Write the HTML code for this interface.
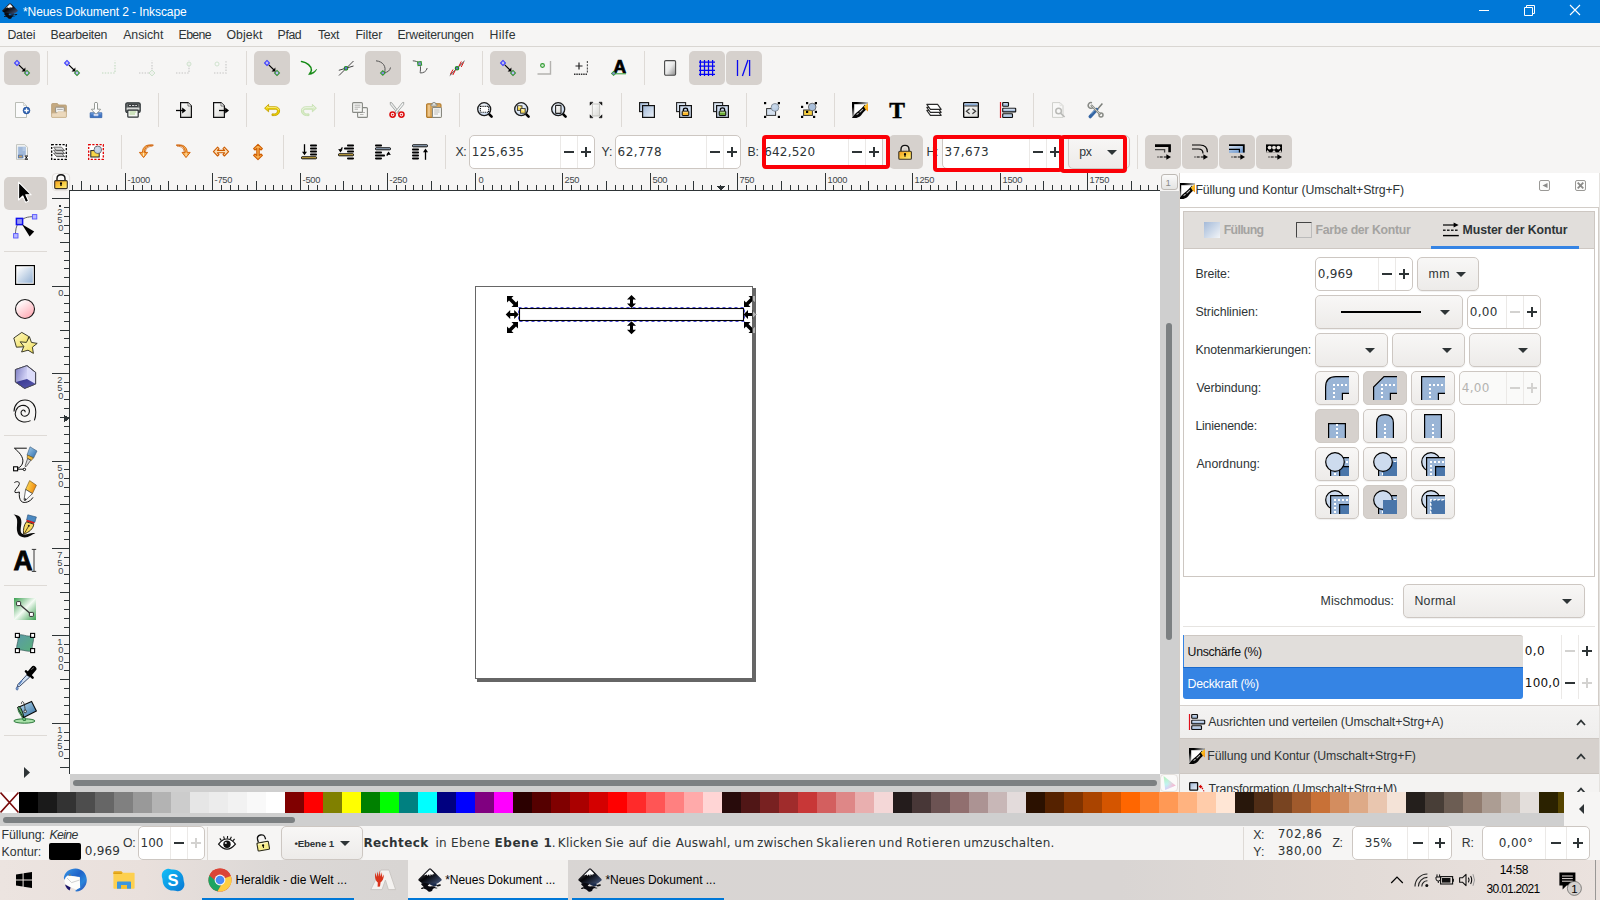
<!DOCTYPE html>
<html lang="de"><head><meta charset="utf-8"><title>*Neues Dokument 2 - Inkscape</title>
<style>
html,body{margin:0;padding:0;}
body{width:1600px;height:900px;overflow:hidden;position:relative;background:#f6f5f4;font-family:"Liberation Sans",sans-serif;color:#2e3436;}
#app div,#app span,#app svg{position:absolute;}
#app span{white-space:pre;line-height:1;}
#app svg{overflow:visible;}
.fD{font-family:"DejaVu Sans",sans-serif;}
.fS{font-family:"Liberation Serif",serif;}
</style></head><body><div id="app">
<div style="left:0px;top:0px;width:1600px;height:23px;background:#0078d7;"></div>
<svg style="left:2.0px;top:3.0px;" width="16" height="16" viewBox="0 0 24 24"><defs><linearGradient id="gink" x1="0.2" y1="0" x2="1" y2="0.8"><stop offset="0" stop-color="#55555c"/><stop offset="0.45" stop-color="#050508"/><stop offset="1" stop-color="#3e4e70"/></linearGradient></defs><path d="M12 0.2Q12.7 0.2 13.4 0.9L23.4 10.9Q24.2 11.8 23.2 12.8Q20.6 15.2 17.6 16.2H6.4Q3.4 15.2 0.8 12.8Q-0.2 11.8 0.6 10.9L10.6 0.9Q11.3 0.2 12 0.2Z" fill="url(#gink)"/><path d="M12 1.4L15.4 4.8L16.4 6.6L14.8 6L14.2 7.6L12.8 6L12 8.6L11 6.2L9.2 8L9 6.4L5.8 7.6Z" fill="#fff"/><path d="M3.4 15.6C5.2 14.8 9 15 10.8 15.8C12.4 16.6 9 17.2 10 18C11.4 19 16.4 17.6 17.6 19C18.6 20.2 14.4 20.4 14.6 21.6C14.8 22.8 13 24 11.4 23.8C9.6 23.6 9.6 22.4 8.2 21.6C6.6 20.8 4.4 20.4 5.4 19.2C6.2 18.4 2.2 17 3.4 15.6Z" fill="#0a0a10"/><path d="M11.6 15.6H18C18.6 16.6 19.4 17.2 18.6 18C16.8 18.4 12.6 18.2 11.6 15.6Z" fill="#1c2c4c"/><ellipse cx="20.8" cy="17.4" rx="2.2" ry="0.9" fill="#111" transform="rotate(-12 20.8 17.4)"/><ellipse cx="18.2" cy="20" rx="1.2" ry="0.6" fill="#333"/><ellipse cx="4.4" cy="20.2" rx="1.4" ry="0.8" fill="#111" transform="rotate(-15 4.4 20.2)"/></svg>
<span style="left:23.0px;top:6px;font-size:12px;color:#fff;letter-spacing:-0.09px;">*Neues Dokument 2 - Inkscape</span>
<div style="left:1479px;top:10px;width:10px;height:1px;background:#fff;"></div>
<svg style="left:1524px;top:5px" width="11" height="11" viewBox="0 0 11 11"><path d="M2.5 2.5V0.5H10.5V8.5H8.5M0.5 2.5H8.5V10.5H0.5Z" fill="none" stroke="#fff" stroke-width="1"/></svg>
<svg style="left:1570px;top:5px" width="10" height="10" viewBox="0 0 10 10"><path d="M0 0L10 10M10 0L0 10" fill="none" stroke="#fff" stroke-width="1.1"/></svg>
<div style="left:0px;top:23px;width:1600px;height:23px;background:#f6f5f4;"></div>
<div style="left:0px;top:46px;width:1600px;height:1px;background:#d9d6d2;"></div>
<span style="left:7.4px;top:29px;font-size:12.3px;letter-spacing:-0.15px;">Datei</span>
<span style="left:50.6px;top:29px;font-size:12.3px;letter-spacing:-0.31px;">Bearbeiten</span>
<span style="left:123.2px;top:29px;font-size:12.3px;letter-spacing:-0.03px;">Ansicht</span>
<span style="left:178.6px;top:29px;font-size:12.3px;letter-spacing:-0.65px;">Ebene</span>
<span style="left:226.4px;top:29px;font-size:12.3px;letter-spacing:0.08px;">Objekt</span>
<span style="left:277.6px;top:29px;font-size:12.3px;letter-spacing:-0.40px;">Pfad</span>
<span style="left:318.0px;top:29px;font-size:12.3px;letter-spacing:-0.40px;">Text</span>
<span style="left:355.4px;top:29px;font-size:12.3px;letter-spacing:-0.08px;">Filter</span>
<span style="left:397.4px;top:29px;font-size:12.3px;letter-spacing:-0.23px;">Erweiterungen</span>
<span style="left:489.4px;top:29px;font-size:12.3px;letter-spacing:0.40px;">Hilfe</span>
<div style="left:4px;top:51px;width:36px;height:34px;background:#d6d1cd;border-radius:5px;"></div>
<svg style="left:14.0px;top:60.0px;" width="16" height="16" viewBox="0 0 16 16"><path d="M3 -0.20000000000000018L6.2 3L3 6.2L-0.20000000000000018 3Z" fill="#3535ff"/><circle cx="3" cy="3" r="1.44" fill="#b9b9f5"/><path d="M13 9.8L16.2 13L13 16.2L9.8 13Z" fill="#2f8f2f"/><circle cx="13" cy="13" r="1.44" fill="#b9b9f5"/><path d="M4.8 4.8L10 10" stroke="#000" stroke-width="1.1"/><path d="M11.4 11.4V7.6L7.6 11.4Z" fill="#000"/></svg>
<div style="left:47px;top:51px;width:1px;height:34px;background:#dedad6;"></div>
<svg style="left:64.0px;top:60.0px;" width="16" height="16" viewBox="0 0 16 16"><path d="M3 -0.20000000000000018L6.2 3L3 6.2L-0.20000000000000018 3Z" fill="#3535ff"/><circle cx="3" cy="3" r="1.44" fill="#b9b9f5"/><path d="M13 9.8L16.2 13L13 16.2L9.8 13Z" fill="#2f8f2f"/><circle cx="13" cy="13" r="1.44" fill="#b9b9f5"/><path d="M4.8 4.8L10 10" stroke="#000" stroke-width="1.1"/><path d="M11.4 11.4V7.6L7.6 11.4Z" fill="#000"/></svg>
<svg style="left:101.0px;top:60.0px;opacity:0.2;" width="16" height="16" viewBox="0 0 16 16"><path d="M1 13H14V0.5" stroke="#3a9a3a" stroke-width="1.6" stroke-dasharray="1.4 1.4" fill="none"/></svg>
<svg style="left:138.0px;top:60.0px;opacity:0.2;" width="16" height="16" viewBox="0 0 16 16"><path d="M1 13H14V0.5" stroke="#555" stroke-width="1.6" stroke-dasharray="1.4 1.4" fill="none"/><path d="M14 10L17 13L14 16L11 13Z" fill="#cfe6cf" stroke="#3a9a3a"/></svg>
<svg style="left:175.0px;top:60.0px;opacity:0.2;" width="16" height="16" viewBox="0 0 16 16"><path d="M1 13H14V0.5" stroke="#555" stroke-width="1.6" stroke-dasharray="1.4 1.4" fill="none"/><circle cx="14" cy="4" r="2" fill="#cfe6cf" stroke="#3a9a3a"/></svg>
<svg style="left:212.0px;top:60.0px;opacity:0.2;" width="16" height="16" viewBox="0 0 16 16"><path d="M2 13H14V0.5" stroke="#555" stroke-width="1.6" stroke-dasharray="1.4 1.4" fill="none"/><circle cx="5" cy="4" r="2" fill="#fff" stroke="#3a9a3a"/></svg>
<div style="left:246px;top:51px;width:1px;height:34px;background:#dedad6;"></div>
<div style="left:254px;top:51px;width:36px;height:34px;background:#d6d1cd;border-radius:5px;"></div>
<svg style="left:264.0px;top:60.0px;" width="16" height="16" viewBox="0 0 16 16"><path d="M3 -0.20000000000000018L6.2 3L3 6.2L-0.20000000000000018 3Z" fill="#3535ff"/><circle cx="3" cy="3" r="1.44" fill="#b9b9f5"/><path d="M13 9.8L16.2 13L13 16.2L9.8 13Z" fill="#2f8f2f"/><circle cx="13" cy="13" r="1.44" fill="#b9b9f5"/><path d="M4.8 4.8L10 10" stroke="#000" stroke-width="1.1"/><path d="M11.4 11.4V7.6L7.6 11.4Z" fill="#000"/></svg>
<svg style="left:301.0px;top:60.0px;" width="16" height="16" viewBox="0 0 16 16"><path d="M0.5 1.6C6 2.5 10.5 6 10.4 10.2" fill="none" stroke="#138a13" stroke-width="1.5" stroke-linecap="round"/><path d="M15.6 9.2C14.5 12.5 11.5 14.4 7.6 14.6L10.6 9.6C10.8 11.5 10.3 12.2 9.8 13C12 12.6 13.8 11.5 15.6 9.2Z" fill="#138a13" stroke="#138a13" stroke-width="0.6" stroke-linejoin="round"/></svg>
<svg style="left:338.0px;top:60.0px;" width="16" height="16" viewBox="0 0 16 16"><path d="M1 15.5L15.5 1M0.8 10.3L15.5 6" stroke="#444" stroke-width="1" fill="none"/><circle cx="8" cy="8.3" r="1.8" fill="#6a6ad8" stroke="#1f8a1f" stroke-width="1.1"/></svg>
<div style="left:365px;top:51px;width:36px;height:34px;background:#d6d1cd;border-radius:5px;"></div>
<svg style="left:375.0px;top:60.0px;" width="16" height="16" viewBox="0 0 16 16"><path d="M1 0.8C8 1.5 11.5 6.5 9.5 12.5C12.5 12.5 15 10.5 15.5 7.5" fill="none" stroke="#555" stroke-width="1"/><path d="M7.8 10L10.8 13L7.8 16L4.8 13Z" fill="#2f9a2f"/><circle cx="7.8" cy="13" r="1.35" fill="#8a8ae0"/></svg>
<svg style="left:412.0px;top:60.0px;" width="16" height="16" viewBox="0 0 16 16"><path d="M0.8 0.8C7 1.2 8.5 4 8.5 8C8.5 11 8 12.5 8.3 13C11.5 13 14.5 11.5 15.2 8" fill="none" stroke="#555" stroke-width="1"/><rect x="5.8" y="1.8" width="3.6" height="3.6" fill="#8a8ae0" stroke="#2f9a2f" stroke-width="1.1" transform="rotate(-8 7.6 3.6)"/></svg>
<svg style="left:449.0px;top:60.0px;" width="16" height="16" viewBox="0 0 16 16"><path d="M0.8 15.5L15.5 1" stroke="#333" stroke-width="1" fill="none"/><path d="M1.5 14L4 9.5M3.8 15L6.2 10.5M10 6L12.3 1.5M12.2 7L14.5 2.5" stroke="#e01010" stroke-width="1" fill="none"/><circle cx="8" cy="8.3" r="1.7" fill="#6a6ad8" stroke="#1f8a1f" stroke-width="1.2"/></svg>
<div style="left:482px;top:51px;width:1px;height:34px;background:#dedad6;"></div>
<div style="left:490px;top:51px;width:36px;height:34px;background:#d6d1cd;border-radius:5px;"></div>
<svg style="left:500.0px;top:60.0px;" width="16" height="16" viewBox="0 0 16 16"><path d="M3 -0.20000000000000018L6.2 3L3 6.2L-0.20000000000000018 3Z" fill="#3535ff"/><circle cx="3" cy="3" r="1.44" fill="#b9b9f5"/><path d="M13 9.8L16.2 13L13 16.2L9.8 13Z" fill="#2f8f2f"/><circle cx="13" cy="13" r="1.44" fill="#b9b9f5"/><path d="M4.8 4.8L10 10" stroke="#000" stroke-width="1.1"/><path d="M11.4 11.4V7.6L7.6 11.4Z" fill="#000"/></svg>
<svg style="left:536.0px;top:60.0px;" width="16" height="16" viewBox="0 0 16 16"><path d="M1.5 14H14.5V1" fill="none" stroke="#b4b2af" stroke-width="1.4"/><circle cx="6.5" cy="5.5" r="1.9" fill="#d5ecd5" stroke="#2f9a2f" stroke-width="1.1"/></svg>
<svg style="left:573.0px;top:60.0px;" width="16" height="16" viewBox="0 0 16 16"><path d="M1 14.2H14" fill="none" stroke="#333" stroke-width="1.4" stroke-dasharray="1.5 0.8"/><path d="M14.4 1V13" fill="none" stroke="#555" stroke-width="1.2" stroke-dasharray="2 1.2"/><path d="M6 2.5V9.5M2.5 6H9.5" stroke="#222" stroke-width="1.2" fill="none"/></svg>
<svg style="left:611.0px;top:60.0px;" width="16" height="16" viewBox="0 0 16 16"><text x="2.2" y="13.4" font-family="'Liberation Sans',sans-serif" font-weight="700" font-size="17.5" fill="#000" stroke="#000" stroke-width="0.7" textLength="13" lengthAdjust="spacingAndGlyphs">A</text><path d="M3 13.8H15" stroke="#2f9a2f" stroke-width="1"/><path d="M2.6 10.7L5.300000000000001 13.4L2.6 16.1L-0.10000000000000009 13.4Z" fill="#2f9a2f"/><circle cx="2.6" cy="13.4" r="1.22" fill="#8a8ae0"/></svg>
<div style="left:644px;top:51px;width:1px;height:34px;background:#dedad6;"></div>
<svg style="left:662.0px;top:60.0px;" width="16" height="16" viewBox="0 0 16 16"><defs><linearGradient id="gpg" x1="0" y1="0" x2="1" y2="1"><stop offset="0" stop-color="#fff"/><stop offset="0.5" stop-color="#e8e8e8"/><stop offset="1" stop-color="#8a8a8a"/></linearGradient></defs><rect x="2.6" y="0.6" width="11" height="14.6" rx="1.2" fill="url(#gpg)" stroke="#4a4a4a" stroke-width="1.1"/></svg>
<div style="left:689px;top:51px;width:36px;height:34px;background:#d6d1cd;border-radius:5px;"></div>
<svg style="left:699.0px;top:60.0px;" width="16" height="16" viewBox="0 0 16 16"><path d="M1.4 0V16M5.5 0V16M9.5 0V16M13.6 0V16M0 2H16M0 6.1H16M0 10.3H16M0 14.4H16" stroke="#0505f5" stroke-width="1.25" fill="none"/></svg>
<div style="left:726px;top:51px;width:36px;height:34px;background:#d6d1cd;border-radius:5px;"></div>
<svg style="left:736.0px;top:60.0px;" width="16" height="16" viewBox="0 0 16 16"><path d="M1.5 0V16M13.6 0V16M6.4 16L12 0" stroke="#0a0af0" stroke-width="1.3" fill="none"/></svg>
<svg style="left:14.0px;top:102.0px;" width="16" height="16" viewBox="0 0 16 16"><path d="M1.5 0.5H9.5L12.5 3.5V15.5H1.5Z" fill="#fbfbfb" stroke="#babdb6" stroke-width="1"/><path d="M9.5 0.5V3.5H12.5" fill="#eee" stroke="#c8cac4" stroke-width="0.8"/><circle cx="12.5" cy="8.5" r="3.4" fill="#2a5fb0" stroke="#1d4a94" stroke-width="0.6"/><path d="M12.5 6.3V10.7M10.3 8.5H14.7" stroke="#fff" stroke-width="1.3"/></svg>
<svg style="left:51.0px;top:102.0px;" width="16" height="16" viewBox="0 0 16 16"><path d="M0.6 2.5Q0.6 1.5 1.6 1.5H6.4L7.6 3H14.4Q15.4 3 15.4 4V14.5Q15.4 15.5 14.4 15.5H1.6Q0.6 15.5 0.6 14.5Z" fill="#c4a981" stroke="#b59a72" stroke-width="0.8"/><rect x="4.6" y="5.2" width="8.6" height="5.5" rx="0.6" fill="#f2f2f0" stroke="#8f8a80" stroke-width="0.9"/><path d="M6.2 7.4H11.8" stroke="#aaa" stroke-width="1"/><path d="M0.9 14.6V12Q0.9 11.2 1.9 11.2H5.5L7 9.7H14.2Q15.1 9.7 15.1 10.6V14.6Q15.1 15.2 14.4 15.2H1.6Q0.9 15.2 0.9 14.6Z" fill="#ecd9bd" stroke="#dcc7a6" stroke-width="0.6"/></svg>
<svg style="left:88.0px;top:102.0px;" width="16" height="16" viewBox="0 0 16 16"><path d="M2.2 10.8H13.8V15.6H2.2Z" fill="#3f74c2" stroke="#2f5fa8" stroke-width="0.8"/><path d="M2.6 11.2H13.4V12.4H2.6Z" fill="#6f9ad6"/><rect x="5.8" y="12" width="4.4" height="1.8" rx="0.6" fill="#eef" stroke="#c8d4ea" stroke-width="0.5"/><path d="M6.5 1.2Q6.5 0.4 8 0.4Q9.5 0.4 9.5 1.2V7.2H12.2Q12.9 7.2 12.4 7.9L8.6 11.6Q8 12.1 7.4 11.6L3.6 7.9Q3.1 7.2 3.8 7.2H6.5Z" fill="#fdfdfd" stroke="#8a8f8a" stroke-width="0.9"/></svg>
<svg style="left:125.0px;top:102.0px;" width="16" height="16" viewBox="0 0 16 16"><rect x="0.8" y="0.8" width="14.4" height="9.6" rx="1.5" fill="#6a6e6e" stroke="#2e3436" stroke-width="1.2"/><rect x="3.2" y="2.2" width="9.6" height="2.6" fill="#2e3436"/><path d="M4 3.5H6M7 3.5H9.4M10.2 3.5H12" stroke="#d0d0d0" stroke-width="1"/><rect x="1.6" y="5.6" width="12.8" height="2.2" fill="#d8dad8"/><rect x="2.8" y="8.2" width="10.4" height="7" rx="0.8" fill="#f4f6f2" stroke="#2e3436" stroke-width="1.2"/><path d="M4.6 10H11.2M4.6 12H10" stroke="#a8d08a" stroke-width="1.2"/></svg>
<svg style="left:176.0px;top:102.0px;" width="16" height="16" viewBox="0 0 16 16"><defs><linearGradient id="gpage" x1="0" y1="0" x2="1" y2="1"><stop offset="0" stop-color="#fff"/><stop offset="1" stop-color="#d8d8d4"/></linearGradient><linearGradient id="gblue" x1="0" y1="0" x2="1" y2="1"><stop offset="0" stop-color="#9db6d6"/><stop offset="1" stop-color="#eef3f9"/></linearGradient><radialGradient id="glens" cx="0.4" cy="0.35" r="0.7"><stop offset="0" stop-color="#fff"/><stop offset="1" stop-color="#bfd2ea"/></radialGradient></defs><path d="M4.6 0.6H12L15.4 4V15.4H4.6Z" fill="url(#gpage)" stroke="#111" stroke-width="1.2"/><path d="M12 0.8V4H15.2" fill="#fff" stroke="#444" stroke-width="0.7"/><path d="M0 8.5H7" stroke="#000" stroke-width="1.3"/><path d="M6.2 5.6L10 8.5L6.2 11.4Z" fill="#000"/></svg>
<svg style="left:213.0px;top:102.0px;" width="16" height="16" viewBox="0 0 16 16"><path d="M0.6 0.6H8L11.4 4V15.4H0.6Z" fill="url(#gpage)" stroke="#111" stroke-width="1.2"/><path d="M8 0.8V4H11.2" fill="#fff" stroke="#444" stroke-width="0.7"/><path d="M6 8.5H13" stroke="#000" stroke-width="1.3"/><path d="M12.2 5.6L16 8.5L12.2 11.4Z" fill="#000"/></svg>
<svg style="left:264.0px;top:102.0px;" width="16" height="16" viewBox="0 0 16 16"><path d="M0.6 6.2L4.6 2.4V4.8H11.2C14.2 4.8 15.6 6.6 15.6 8.9C15.6 11.6 13.6 13.4 10.4 13.6H8V11.9H10.6C12.4 11.8 13.4 10.6 13.4 9.1C13.4 7.8 12.6 7.2 11.2 7.2H4.6V9.8Z" fill="#edd400" stroke="#c4a000" stroke-width="0.9" stroke-linejoin="round"/><path d="M2.2 6.1L4 4.4V5.5H11C13.2 5.5 14.4 6.6 14.7 8" fill="none" stroke="#fdf3a0" stroke-width="0.7"/></svg>
<svg style="left:301.0px;top:102.0px;" width="16" height="16" viewBox="0 0 16 16"><g transform="translate(16 0) scale(-1 1)" opacity="0.45"><path d="M0.6 6.2L4.6 2.4V4.8H11.2C14.2 4.8 15.6 6.6 15.6 8.9C15.6 11.6 13.6 13.4 10.4 13.6H8V11.9H10.6C12.4 11.8 13.4 10.6 13.4 9.1C13.4 7.8 12.6 7.2 11.2 7.2H4.6V9.8Z" fill="#b6e08e" stroke="#8cc860" stroke-width="0.9" stroke-linejoin="round"/><path d="M2.2 6.1L4 4.4V5.5H11C13.2 5.5 14.4 6.6 14.7 8" fill="none" stroke="#eaf8dc" stroke-width="0.7"/></g></svg>
<svg style="left:352.0px;top:102.0px;" width="16" height="16" viewBox="0 0 16 16"><rect x="5.6" y="5.6" width="9.8" height="9.8" rx="1" fill="#f6f6f4" stroke="#888a85" stroke-width="1.1"/><path d="M8 12.5H11.5M9.5 10.5H13" stroke="#b0b0ae" stroke-width="0.9"/><rect x="0.6" y="0.6" width="9.8" height="9.8" rx="1" fill="#f6f6f4" stroke="#888a85" stroke-width="1.1"/><path d="M2.6 3.2H8.4M2.6 5.2H8.4M2.6 7.2H6" stroke="#a8a8a6" stroke-width="0.9"/></svg>
<svg style="left:389.0px;top:102.0px;" width="16" height="16" viewBox="0 0 16 16"><path d="M1.2 0.4L2.6 0.6L10.4 10.6L8.8 11.6L1.4 2.6Z" fill="#e8eaea" stroke="#8a8d8a" stroke-width="0.7"/><path d="M14.8 0.4L13.4 0.6L5.6 10.6L7.2 11.6L14.6 2.6Z" fill="#f4f6f6" stroke="#8a8d8a" stroke-width="0.7"/><circle cx="3.6" cy="12.6" r="2.6" fill="#fff" stroke="#dc1010" stroke-width="1.6"/><circle cx="12.4" cy="12.6" r="2.6" fill="#fff" stroke="#dc1010" stroke-width="1.6"/><circle cx="3.6" cy="12.6" r="0.9" fill="#dc1010"/><circle cx="12.4" cy="12.6" r="0.9" fill="#dc1010"/></svg>
<svg style="left:426.0px;top:102.0px;" width="16" height="16" viewBox="0 0 16 16"><rect x="0.6" y="1.8" width="14.4" height="13.6" rx="1.2" fill="#dba658" stroke="#b07a2c" stroke-width="1.1"/><path d="M1.8 3H4V14.4H1.8Z" fill="#ecc488"/><path d="M5 3.2V2.2H6.4V1.2Q6.4 0.4 8 0.4Q9.6 0.4 9.6 1.2V2.2H11V3.2Q11 4.2 10 4.2H6Q5 4.2 5 3.2Z" fill="#d8dad6" stroke="#80837e" stroke-width="0.8"/><rect x="6.4" y="5.6" width="9" height="9.8" rx="0.6" fill="#f8f8f6" stroke="#7e807a" stroke-width="1"/><path d="M8.2 8H13.6M8.2 10H13.6M8.2 12H12" stroke="#b4b4b0" stroke-width="0.9"/></svg>
<svg style="left:477.0px;top:102.0px;" width="16" height="16" viewBox="0 0 16 16"><path d="M11.4 11.4L14.6 14.6" stroke="#000" stroke-width="2.6" stroke-linecap="round"/><circle cx="7.2" cy="7.2" r="6.5" fill="url(#glens)" stroke="#1a1a1a" stroke-width="1.3"/><rect x="3.4" y="4.4" width="8.2" height="5.8" fill="#fff" stroke="#000" stroke-width="1.1" stroke-dasharray="1.1 1"/></svg>
<svg style="left:514.0px;top:102.0px;" width="16" height="16" viewBox="0 0 16 16"><path d="M11.4 11.4L14.6 14.6" stroke="#000" stroke-width="2.6" stroke-linecap="round"/><circle cx="7.2" cy="7.2" r="6.5" fill="url(#glens)" stroke="#1a1a1a" stroke-width="1.3"/><rect x="3.4" y="3.8" width="4.6" height="4.6" fill="#f6d84a" stroke="#333" stroke-width="0.9"/><rect x="6.6" y="6.6" width="4.6" height="4.6" fill="#f9de60" stroke="#333" stroke-width="0.9"/><path d="M4.4 4.8H6V6.2M7.6 7.6H9.2V9" stroke="#fff" stroke-width="0.8" fill="none"/></svg>
<svg style="left:551.0px;top:102.0px;" width="16" height="16" viewBox="0 0 16 16"><path d="M11.4 11.4L14.6 14.6" stroke="#000" stroke-width="2.6" stroke-linecap="round"/><circle cx="7.2" cy="7.2" r="6.5" fill="url(#glens)" stroke="#1a1a1a" stroke-width="1.3"/><rect x="4.6" y="3.4" width="5.4" height="8" rx="0.5" fill="url(#gpage)" stroke="#222" stroke-width="1.1"/></svg>
<svg style="left:588.0px;top:102.0px;" width="16" height="16" viewBox="0 0 16 16"><rect x="4.3" y="2" width="7.4" height="12" fill="url(#gpage)" stroke="#b8b8b4" stroke-width="0.8"/><path d="M2 0.2H5L2 3.2ZM14 0.2H11L14 3.2ZM2 15.8H5L2 12.8ZM14 15.8H11L14 12.8Z" fill="#111" stroke="#111" stroke-width="0.5"/></svg>
<svg style="left:639.0px;top:102.0px;" width="16" height="16" viewBox="0 0 16 16"><rect x="0.6" y="0.6" width="9" height="9" fill="url(#gblue)" stroke="#111" stroke-width="1.1"/><rect x="3.6" y="3.6" width="11.8" height="11.8" fill="url(#gblue)" stroke="#111" stroke-width="1.2"/></svg>
<svg style="left:676.0px;top:102.0px;" width="16" height="16" viewBox="0 0 16 16"><rect x="0.6" y="0.6" width="9" height="9" fill="#dbe6f3" stroke="#222" stroke-width="1.1"/><rect x="3.6" y="3.6" width="11.8" height="11.8" fill="#cddbee" stroke="#111" stroke-width="1.2"/><path d="M7.4 9.4V8Q7.4 6.2 9.5 6.2Q11.6 6.2 11.6 8V9.4" fill="none" stroke="#000" stroke-width="1.3"/><rect x="6.2" y="9.2" width="6.6" height="4.4" rx="0.5" fill="#fbb829" stroke="#000" stroke-width="1"/><path d="M7 10.2H12" stroke="#ffe9a8" stroke-width="0.8"/></svg>
<svg style="left:713.0px;top:102.0px;" width="16" height="16" viewBox="0 0 16 16"><rect x="0.6" y="0.6" width="9" height="9" fill="#dbe6f3" stroke="#222" stroke-width="1.1"/><rect x="3.6" y="3.6" width="11.8" height="11.8" fill="#cddbee" stroke="#111" stroke-width="1.2"/><path d="M7.4 8.4V7.6Q7.4 5.8 9.5 5.8Q11.6 5.8 11.6 7.6V9.4" fill="none" stroke="#000" stroke-width="1.3"/><rect x="6.2" y="9.2" width="6.6" height="4.4" rx="0.5" fill="#6fae3a" stroke="#000" stroke-width="1"/><path d="M7 10.2H12" stroke="#d5efb8" stroke-width="0.8"/></svg>
<svg style="left:764.0px;top:102.0px;" width="16" height="16" viewBox="0 0 16 16"><rect x="2.6" y="6.6" width="9" height="6.8" fill="#d5e1f0" stroke="#333" stroke-width="1"/><circle cx="11" cy="5.4" r="3.8" fill="url(#glens)" stroke="#666" stroke-width="0.9"/><circle cx="11" cy="5.4" r="3.8" fill="#a9bfdb" opacity="0.6"/><rect x="0" y="0" width="2.2" height="2.2" fill="#000"/><rect x="13.8" y="0" width="2.2" height="2.2" fill="#000"/><rect x="0" y="13.8" width="2.2" height="2.2" fill="#000"/><rect x="13.8" y="13.8" width="2.2" height="2.2" fill="#000"/></svg>
<svg style="left:801.0px;top:102.0px;" width="16" height="16" viewBox="0 0 16 16"><rect x="2.6" y="8" width="8.8" height="5.4" fill="#f8d040" stroke="#333" stroke-width="1"/><circle cx="11.2" cy="5" r="3.8" fill="#a9bfdb" stroke="#666" stroke-width="0.9"/><rect x="0" y="3.8" width="2.2" height="2.2" fill="#000"/><rect x="5" y="0" width="2.2" height="2.2" fill="#000"/><rect x="13.8" y="0" width="2.2" height="2.2" fill="#000"/><rect x="13.8" y="8.8" width="2.2" height="2.2" fill="#000"/><rect x="0" y="13.8" width="2.2" height="2.2" fill="#000"/><rect x="12" y="13.8" width="2.2" height="2.2" fill="#000"/><rect x="5" y="8.8" width="2.2" height="2.2" fill="#000"/></svg>
<svg style="left:852.0px;top:102.0px;" width="16" height="16" viewBox="0 0 16 16"><defs><linearGradient id="gfl1" x1="0" y1="0" x2="1" y2="0"><stop offset="0.3" stop-color="#000"/><stop offset="1" stop-color="#000" stop-opacity="0.25"/></linearGradient><linearGradient id="gfl2" x1="0" y1="0" x2="0" y2="1"><stop offset="0.3" stop-color="#000"/><stop offset="1" stop-color="#000" stop-opacity="0.2"/></linearGradient><linearGradient id="gfl3" x1="0" y1="0" x2="1" y2="1"><stop offset="0" stop-color="#ffe030"/><stop offset="1" stop-color="#f89010"/></linearGradient></defs><path d="M0 0H16L0 16Z" fill="#fff"/><rect x="0" y="0" width="16" height="2.2" fill="url(#gfl1)"/><rect x="0" y="0" width="2.2" height="16" fill="url(#gfl2)"/><path d="M0 16C1.6 13.6 3.4 11.2 5.6 9.8C8 8.2 10.6 5.4 13 2.6L15 6.8C13.4 8.4 11.4 10 10.2 11.8C9 14 7 15.4 4.4 16Z" fill="#050505"/><path d="M4.6 12.6L6.6 11.2M7.6 10.4L11 7.2" stroke="#bbb" stroke-width="1.1"/><path d="M11.8 4.4L16 1.2V9.6L13.6 7.4Z" fill="url(#gfl3)"/></svg>
<svg style="left:889.0px;top:102.0px;" width="16" height="16" viewBox="0 0 16 16"><text x="8" y="15.6" text-anchor="middle" font-family="'Liberation Serif',serif" font-weight="700" font-size="23.5" fill="#000" stroke="#000" stroke-width="0.5">T</text></svg>
<svg style="left:926.0px;top:102.0px;" width="16" height="16" viewBox="0 0 16 16"><path d="M0.8 8.4H11.6L15.2 13.4H4.4Z" fill="#fff" stroke="#2a2a2a" stroke-width="1.1" stroke-linejoin="round"/><path d="M0.8 5.4H11.6L15.2 10.4H4.4Z" fill="#fff" stroke="#2a2a2a" stroke-width="1.1" stroke-linejoin="round"/><path d="M0.8 2.4H11.6L15.2 7.4H4.4Z" fill="#fff" stroke="#2a2a2a" stroke-width="1.1" stroke-linejoin="round"/></svg>
<svg style="left:963.0px;top:102.0px;" width="16" height="16" viewBox="0 0 16 16"><rect x="0.7" y="0.7" width="14.6" height="14.6" rx="0.6" fill="url(#gpage)" stroke="#000" stroke-width="1.3"/><path d="M1.4 3.9H14.6" stroke="#000" stroke-width="1"/><rect x="1.6" y="1.6" width="12.8" height="1.7" fill="#8db2e0"/><path d="M6.6 6.8L3.4 9.3L6.6 11.8M9.4 6.8L12.6 9.3L9.4 11.8" fill="none" stroke="#3a3a3a" stroke-width="1.2"/></svg>
<svg style="left:1000.0px;top:102.0px;" width="16" height="16" viewBox="0 0 16 16"><path d="M0.5 0V16" stroke="#e0101c" stroke-width="1.2"/><rect x="2.7" y="0.6" width="5.8" height="3.6" rx="0.5" fill="#a9c0de" stroke="#111" stroke-width="1.1"/><rect x="2.7" y="6.3" width="13" height="3.6" rx="0.5" fill="#a9c0de" stroke="#111" stroke-width="1.1"/><rect x="2.7" y="11.9" width="9.8" height="3.6" rx="0.5" fill="#a9c0de" stroke="#111" stroke-width="1.1"/><path d="M3.6 1.6H7.6M3.6 7.3H14.8M3.6 12.9H11.6" stroke="#dfe9f5" stroke-width="0.8"/></svg>
<svg style="left:1050.0px;top:102.0px;" width="16" height="16" viewBox="0 0 16 16"><g opacity="0.55"><path d="M2.5 0.6H10L13 3.6V15.4H2.5Z" fill="#fbfbfa" stroke="#b0b3ac" stroke-width="1"/><path d="M10 0.8V3.6H12.8" fill="none" stroke="#c8c8c4" stroke-width="0.7"/><circle cx="8.6" cy="9" r="2.8" fill="none" stroke="#888a85" stroke-width="1.5"/><path d="M10.4 11L14.6 15" stroke="#888a85" stroke-width="1.7"/><circle cx="8.6" cy="9" r="1" fill="#fbfbfa"/></g></svg>
<svg style="left:1088.0px;top:102.0px;" width="16" height="16" viewBox="0 0 16 16"><path d="M14.4 1.6L8.4 8.4" stroke="#7a7d78" stroke-width="1.5"/><path d="M8.6 7.6L2.2 14.6" stroke="#3465a4" stroke-width="3.4" stroke-linecap="round"/><path d="M7.6 7.2L3 12.4" stroke="#729fcf" stroke-width="0.9"/><path d="M3 3L12.6 12.8" stroke="#888a85" stroke-width="2.2"/><path d="M4 0.8A2.8 2.8 0 1 0 5.2 5.2" fill="none" stroke="#888a85" stroke-width="1.5"/><circle cx="13" cy="13" r="2" fill="none" stroke="#888a85" stroke-width="1.5"/><path d="M3.4 3.4L12.6 12.6" stroke="#d3d7cf" stroke-width="0.8"/></svg>
<div style="left:158px;top:93px;width:1px;height:34px;background:#dedad6;"></div>
<div style="left:246px;top:93px;width:1px;height:34px;background:#dedad6;"></div>
<div style="left:334px;top:93px;width:1px;height:34px;background:#dedad6;"></div>
<div style="left:459px;top:93px;width:1px;height:34px;background:#dedad6;"></div>
<div style="left:621px;top:93px;width:1px;height:34px;background:#dedad6;"></div>
<div style="left:746px;top:93px;width:1px;height:34px;background:#dedad6;"></div>
<div style="left:834px;top:93px;width:1px;height:34px;background:#dedad6;"></div>
<div style="left:1033px;top:93px;width:1px;height:34px;background:#dedad6;"></div>
<svg style="left:14.0px;top:144.0px;" width="16" height="16" viewBox="0 0 16 16"><path d="M2.5 0.6H10.8L13.5 3.3V15.4H2.5Z" fill="#f4f5f3" stroke="#c3c5bf" stroke-width="1"/><rect x="3.8" y="2.6" width="8.2" height="11.6" fill="#b4c9e4"/><path d="M4.6 4H8.6M4.6 6H8.6M4.6 8H11.2M4.6 10H11.2" stroke="#8aa5cc" stroke-width="0.9"/><rect x="4.4" y="11.2" width="4" height="2.6" fill="#c8a060" stroke="#5a78a8" stroke-width="0.9"/><rect x="10" y="11.4" width="4.6" height="4.4" fill="#fff"/><path d="M10.6 12H14M10.6 15.2H14M11.6 12.6L13 14.6M13 12.6L11.6 14.6" stroke="#000" stroke-width="1"/></svg>
<svg style="left:51.0px;top:144.0px;" width="16" height="16" viewBox="0 0 16 16"><defs><linearGradient id="glay" x1="0" y1="0" x2="0" y2="1"><stop offset="0" stop-color="#fff"/><stop offset="1" stop-color="#9a9a9a"/></linearGradient></defs><rect x="0.7" y="0.7" width="14.6" height="14.6" fill="#fff" stroke="#000" stroke-width="1.3" stroke-dasharray="2.2 1.4"/><path d="M2.6 9.2H10.6L13.6 12.6H5.6Z" fill="url(#glay)" stroke="#444" stroke-width="0.8" stroke-linejoin="round"/><path d="M2.6 6.2H10.6L13.6 9.6H5.6Z" fill="url(#glay)" stroke="#444" stroke-width="0.8" stroke-linejoin="round"/><path d="M2.6 3.2H10.6L13.6 6.6H5.6Z" fill="url(#glay)" stroke="#444" stroke-width="0.8" stroke-linejoin="round"/></svg>
<svg style="left:88.0px;top:144.0px;" width="16" height="16" viewBox="0 0 16 16"><rect x="0.7" y="0.7" width="14.6" height="14.6" fill="#fff" stroke="#e00000" stroke-width="1.3" stroke-dasharray="2.2 1.4"/><rect x="2.8" y="6.6" width="8.4" height="6.4" fill="#f8d648" stroke="#222" stroke-width="1"/><circle cx="9.8" cy="5.8" r="3.7" fill="url(#glens)" stroke="#555" stroke-width="0.9"/><circle cx="9.8" cy="5.8" r="3.3" fill="#a9bfdb" opacity="0.55"/></svg>
<svg style="left:138.0px;top:144.0px;" width="16" height="16" viewBox="0 0 16 16"><path d="M15.4 1.2C9.5 1 6.6 3.4 6.4 8.4H9.6L5.6 13.6L1.4 8.4H4.4C4.6 2.6 8.6 0 15.4 1.2Z" fill="#f8b050" stroke="#ce5c00" stroke-width="0.9" stroke-linejoin="round"/><path d="M14.6 2.2C9.4 2.4 7.4 4.6 7.4 8.8" fill="none" stroke="#ce5c00" stroke-width="0.7"/><path d="M5.5 9V12" stroke="#fff3dc" stroke-width="0.8"/></svg>
<svg style="left:176.0px;top:144.0px;" width="16" height="16" viewBox="0 0 16 16"><g transform="translate(15.6 0) scale(-1 1)"><path d="M15.4 1.2C9.5 1 6.6 3.4 6.4 8.4H9.6L5.6 13.6L1.4 8.4H4.4C4.6 2.6 8.6 0 15.4 1.2Z" fill="#f8b050" stroke="#ce5c00" stroke-width="0.9" stroke-linejoin="round"/><path d="M14.6 2.2C9.4 2.4 7.4 4.6 7.4 8.8" fill="none" stroke="#ce5c00" stroke-width="0.7"/><path d="M5.5 9V12" stroke="#fff3dc" stroke-width="0.8"/></g></svg>
<svg style="left:213.0px;top:144.0px;" width="16" height="16" viewBox="0 0 16 16"><path d="M0.4 7.6L4.6 3.2L6 4.6L4.4 6.4H11.6L10 4.6L11.4 3.2L15.6 7.6L11.4 12L10 10.6L11.6 8.8H4.4L6 10.6L4.6 12Z" fill="#fbe0b8" stroke="#ce5c00" stroke-width="1.1" stroke-linejoin="round"/></svg>
<svg style="left:250.0px;top:144.0px;" width="16" height="16" viewBox="0 0 16 16"><g transform="rotate(90 8 8) translate(0 0.4)"><path d="M0.4 7.6L4.6 3.2L6 4.6L4.4 6.4H11.6L10 4.6L11.4 3.2L15.6 7.6L11.4 12L10 10.6L11.6 8.8H4.4L6 10.6L4.6 12Z" fill="#f8b050" stroke="#ce5c00" stroke-width="1.1" stroke-linejoin="round"/></g></svg>
<svg style="left:301.0px;top:144.0px;" width="16" height="16" viewBox="0 0 16 16"><rect x="9" y="0.6" width="7" height="2" rx="0.8" fill="#000"/><rect x="9" y="3.6" width="7" height="2" rx="0.8" fill="#000"/><rect x="9" y="6.6" width="7" height="2" rx="0.8" fill="#000"/><rect x="9" y="9.6" width="7" height="2" rx="0.8" fill="#000"/><rect x="0.5" y="12.8" width="15" height="2" rx="0.6" fill="#f8cf50" stroke="#000" stroke-width="1"/><path d="M3.5 0.2V9" stroke="#000" stroke-width="1.3"/><path d="M1 7.8H6L3.5 11.2Z" fill="#000"/></svg>
<svg style="left:338.0px;top:144.0px;" width="16" height="16" viewBox="0 0 16 16"><rect x="9" y="0.6" width="7" height="2" rx="0.8" fill="#000"/><rect x="6" y="3.6" width="10" height="2" rx="0.8" fill="#000"/><rect x="9" y="6.6" width="7" height="2" rx="0.8" fill="#000"/><rect x="0.5" y="9.8" width="15" height="2" rx="0.6" fill="#f8cf50" stroke="#000" stroke-width="1"/><rect x="9" y="13.4" width="7" height="2" rx="0.8" fill="#000"/><path d="M4.4 3.4L2.2 6.8" stroke="#000" stroke-width="1.2"/><path d="M0.2 5L4.6 5.4L2.4 8.6Z" fill="#000"/></svg>
<svg style="left:375.0px;top:144.0px;" width="16" height="16" viewBox="0 0 16 16"><rect x="0" y="0.6" width="7" height="2" rx="0.8" fill="#000"/><rect x="0.5" y="3.8" width="15" height="2" rx="0.6" fill="#b4cbe6" stroke="#000" stroke-width="1"/><rect x="0" y="7.6" width="7" height="2" rx="0.8" fill="#000"/><rect x="0" y="10.6" width="10" height="2" rx="0.8" fill="#000"/><rect x="0" y="13.4" width="7" height="2" rx="0.8" fill="#000"/><path d="M11.8 11.6L14 8.6" stroke="#000" stroke-width="1.2"/><path d="M15.8 10.4L11.4 10L13.6 6.8Z" fill="#000" transform="translate(0 0.6)"/></svg>
<svg style="left:412.0px;top:144.0px;" width="16" height="16" viewBox="0 0 16 16"><rect x="0.5" y="0.8" width="15" height="2" rx="0.6" fill="#b4cbe6" stroke="#000" stroke-width="1"/><rect x="0" y="4.6" width="7" height="2" rx="0.8" fill="#000"/><rect x="0" y="7.6" width="7" height="2" rx="0.8" fill="#000"/><rect x="0" y="10.6" width="7" height="2" rx="0.8" fill="#000"/><rect x="0" y="13.4" width="7" height="2" rx="0.8" fill="#000"/><path d="M13.5 15.8V7" stroke="#000" stroke-width="1.3"/><path d="M11 8.2H16L13.5 4.6Z" fill="#000"/></svg>
<div style="left:121px;top:135px;width:1px;height:34px;background:#dedad6;"></div>
<div style="left:283px;top:135px;width:1px;height:34px;background:#dedad6;"></div>
<div style="left:445px;top:135px;width:1px;height:34px;background:#dedad6;"></div>
<span style="left:455.4px;top:146px;font-size:12.3px;letter-spacing:-0.30px;">X:</span>
<div style="left:469px;top:135px;width:126px;height:34px;background:#fff;border:1px solid #cdc7c2;box-sizing:border-box;border-radius:5px;"></div>
<div style="left:560px;top:136px;width:1px;height:32px;background:#ebe9e7;"></div>
<div style="left:577px;top:136px;width:1px;height:32px;background:#ebe9e7;"></div>
<div style="left:564px;top:151px;width:10px;height:2px;background:#2e3436;"></div>
<div style="left:581px;top:151px;width:10px;height:2px;background:#2e3436;"></div>
<div style="left:585px;top:147px;width:2px;height:10px;background:#2e3436;"></div>
<span class="fD" style="left:471.8px;top:146px;font-size:12px;letter-spacing:0.40px;">125,635</span>
<span style="left:601.4px;top:146px;font-size:12.3px;">Y:</span>
<div style="left:615px;top:135px;width:126px;height:34px;background:#fff;border:1px solid #cdc7c2;box-sizing:border-box;border-radius:5px;"></div>
<div style="left:706px;top:136px;width:1px;height:32px;background:#ebe9e7;"></div>
<div style="left:723px;top:136px;width:1px;height:32px;background:#ebe9e7;"></div>
<div style="left:710px;top:151px;width:10px;height:2px;background:#2e3436;"></div>
<div style="left:727px;top:151px;width:10px;height:2px;background:#2e3436;"></div>
<div style="left:731px;top:147px;width:2px;height:10px;background:#2e3436;"></div>
<span class="fD" style="left:617.6px;top:146px;font-size:12px;letter-spacing:0.40px;">62,778</span>
<span style="left:747.6px;top:146px;font-size:12.3px;letter-spacing:-0.30px;">B:</span>
<div style="left:762px;top:135px;width:121px;height:34px;background:#fff;border:1px solid #cdc7c2;box-sizing:border-box;border-radius:5px;"></div>
<div style="left:848px;top:136px;width:1px;height:32px;background:#ebe9e7;"></div>
<div style="left:865px;top:136px;width:1px;height:32px;background:#ebe9e7;"></div>
<div style="left:852px;top:151px;width:10px;height:2px;background:#2e3436;"></div>
<div style="left:869px;top:151px;width:10px;height:2px;background:#2e3436;"></div>
<div style="left:873px;top:147px;width:2px;height:10px;background:#2e3436;"></div>
<span class="fD" style="left:764.2px;top:146px;font-size:12px;letter-spacing:0.20px;">642,520</span>
<div style="left:889px;top:135px;width:34px;height:34px;background:#d6d1cd;border-radius:5px;"></div>
<svg style="left:897.0px;top:143.5px;" width="16" height="16" viewBox="0 0 16 16"><defs><linearGradient id="glock" x1="0" y1="0" x2="1" y2="1"><stop offset="0" stop-color="#f39a1c"/><stop offset="0.6" stop-color="#fcd548"/><stop offset="1" stop-color="#fdec8a"/></linearGradient></defs><path d="M4 8V5.4Q4 1.4 8 1.4Q12 1.4 12 5.4V8" fill="none" stroke="#111" stroke-width="1.4"/><path d="M5.4 8V5.6Q5.4 2.8 8 2.8Q10.6 2.8 10.6 5.6V8" fill="none" stroke="#e8e4dc" stroke-width="1"/><rect x="1.8" y="7.3" width="12.6" height="8" rx="1" fill="url(#glock)" stroke="#3a3226" stroke-width="1.1"/><circle cx="8" cy="10.2" r="1.1" fill="#000"/><path d="M7.4 10.4H8.6V12.8H7.4Z" fill="#000"/></svg>
<span style="left:926.4px;top:146px;font-size:12.3px;letter-spacing:-0.30px;">H:</span>
<div style="left:942px;top:135px;width:122px;height:34px;background:#fff;border:1px solid #cdc7c2;box-sizing:border-box;border-radius:5px;"></div>
<div style="left:1029px;top:136px;width:1px;height:32px;background:#ebe9e7;"></div>
<div style="left:1046px;top:136px;width:1px;height:32px;background:#ebe9e7;"></div>
<div style="left:1033px;top:151px;width:10px;height:2px;background:#2e3436;"></div>
<div style="left:1050px;top:151px;width:10px;height:2px;background:#2e3436;"></div>
<div style="left:1054px;top:147px;width:2px;height:10px;background:#2e3436;"></div>
<span class="fD" style="left:944.6px;top:146px;font-size:12px;letter-spacing:0.40px;">37,673</span>
<div style="left:1068px;top:135px;width:62px;height:34px;background:linear-gradient(#f8f7f6,#edebe9);border:1px solid #cdc7c2;box-sizing:border-box;border-radius:5px;box-shadow:0 1px 1px rgba(0,0,0,0.06);"></div>
<span style="left:1079.2px;top:146px;font-size:12.3px;letter-spacing:-0.20px;">px</span>
<svg style="left:1107.0px;top:150.0px" width="10" height="5" viewBox="0 0 10 5"><path d="M0 0H10L5.0 5Z" fill="#2e3436"/></svg>
<div style="left:1137px;top:135px;width:1px;height:34px;background:#dedad6;"></div>
<div style="left:1145px;top:135px;width:35.6px;height:33.8px;background:#d6d1cd;border-radius:5px;"></div>
<svg style="left:1155.0px;top:144.0px;" width="16" height="16" viewBox="0 0 16 16"><path d="M0 1.6H14.6V8.2" fill="none" stroke="#000" stroke-width="2.6"/><path d="M0 5.7H9.6V8.4" fill="none" stroke="#444" stroke-width="1.3"/><path d="M2.4 13H12" stroke="#000" stroke-width="1.2" stroke-dasharray="1.2 1.1 3 1.1 5 0"/><path d="M11.4 10.2L16 13L11.4 15.8Z" fill="#000"/></svg>
<div style="left:1182px;top:135px;width:35.6px;height:33.8px;background:#d6d1cd;border-radius:5px;"></div>
<svg style="left:1192.0px;top:144.0px;" width="16" height="16" viewBox="0 0 16 16"><path d="M0 1H8Q15.4 1 15.4 8.2" fill="none" stroke="#000" stroke-width="1.2"/><path d="M0 5H6.4Q11 5 11 9.4" fill="none" stroke="#000" stroke-width="1.2"/><path d="M2.4 13H12" stroke="#000" stroke-width="1.2" stroke-dasharray="1.2 1.1 3 1.1 5 0"/><path d="M11.4 10.2L16 13L11.4 15.8Z" fill="#000"/></svg>
<div style="left:1219px;top:135px;width:35.6px;height:33.8px;background:#d6d1cd;border-radius:5px;"></div>
<svg style="left:1229.0px;top:144.0px;" width="16" height="16" viewBox="0 0 16 16"><defs><linearGradient id="gtg" x1="0" y1="0" x2="0.6" y2="1"><stop offset="0" stop-color="#e4ecf6"/><stop offset="1" stop-color="#6f9ad0"/></linearGradient></defs><rect x="0" y="0.6" width="15.4" height="8.2" fill="url(#gtg)"/><path d="M0 1.2H14.8V8.4" fill="none" stroke="#000" stroke-width="1.8"/><path d="M0 5.4H10.4V8.6" fill="none" stroke="#000" stroke-width="1.2"/><path d="M2.4 13H12" stroke="#000" stroke-width="1.2" stroke-dasharray="1.2 1.1 3 1.1 5 0"/><path d="M11.4 10.2L16 13L11.4 15.8Z" fill="#000"/></svg>
<div style="left:1256px;top:135px;width:35.6px;height:33.8px;background:#d6d1cd;border-radius:5px;"></div>
<svg style="left:1266.0px;top:144.0px;" width="16" height="16" viewBox="0 0 16 16"><rect x="0" y="0.4" width="16" height="8" fill="#000"/><circle cx="3.6" cy="3.6" r="1.9" fill="#e8e4e0"/><circle cx="8" cy="3.6" r="1.9" fill="#e8e4e0"/><circle cx="12.4" cy="3.6" r="1.9" fill="#e8e4e0"/><path d="M0 8.4L1.4 6L3.6 8.4ZM5.8 8.4L8 6L10.2 8.4ZM12.4 8.4L14.4 6L16 8.4Z" fill="#d6d1cd"/><path d="M2.4 13H12" stroke="#000" stroke-width="1.2" stroke-dasharray="1.2 1.1 3 1.1 5 0"/><path d="M11.4 10.2L16 13L11.4 15.8Z" fill="#000"/></svg>
<div style="left:4px;top:177px;width:43px;height:33px;background:#d6d1cd;border-radius:5px;"></div>
<svg style="left:13.0px;top:181.0px;" width="24" height="24" viewBox="0 0 24 24"><path d="M5.6 1.2V19L9.8 15L12.6 21.4L15.6 20L12.8 13.8H18.2Z" fill="#000" stroke="#fff" stroke-width="1.1" stroke-linejoin="round"/></svg>
<svg style="left:13.0px;top:212.4px;" width="24" height="24" viewBox="0 0 24 24"><path d="M5.8 10.2C10 6 14 4.6 21.6 4.6M5.6 11C3 14 2.6 18 2.4 22.6" fill="none" stroke="#555" stroke-width="0.9"/><rect x="3.4" y="6.4" width="6.2" height="6.2" fill="#9a9af0" stroke="#1010f0" stroke-width="1.5"/><rect x="19.4" y="2.6" width="4.4" height="4.4" fill="#b8b8ff" stroke="#5555ff" stroke-width="0.9"/><rect x="0.6" y="21.6" width="4.4" height="4.4" fill="#b8b8ff" stroke="#5555ff" stroke-width="0.9"/><path d="M9 12.2L21.2 19.6L16.6 24.4Z" fill="#000"/></svg>
<svg style="left:13.0px;top:263.0px;" width="24" height="24" viewBox="0 0 24 24"><defs><linearGradient id="gtr" x1="0" y1="0" x2="1" y2="1"><stop offset="0" stop-color="#fff"/><stop offset="1" stop-color="#95b2d4"/></linearGradient><linearGradient id="gte" x1="0.2" y1="0.1" x2="0.8" y2="0.95"><stop offset="0" stop-color="#fff"/><stop offset="1" stop-color="#ffaab4"/></linearGradient></defs><rect x="2.6" y="2.6" width="18.8" height="18.8" fill="#fff" stroke="#000" stroke-width="1.2"/><rect x="4.2" y="4.2" width="15.6" height="15.6" fill="url(#gtr)"/></svg>
<svg style="left:13.0px;top:297.0px;" width="24" height="24" viewBox="0 0 24 24"><circle cx="12" cy="12" r="9.5" fill="url(#gte)" stroke="#1a1a1a" stroke-width="1.1"/></svg>
<svg style="left:13.0px;top:331.0px;" width="24" height="24" viewBox="0 0 24 24"><defs><linearGradient id="gst" x1="0" y1="0" x2="1" y2="1"><stop offset="0" stop-color="#fffbd0"/><stop offset="1" stop-color="#f0dc50"/></linearGradient></defs><path d="M8.8 1.4L15.6 5.4L14 15.6L3.4 16.2L0.8 7Z" fill="url(#gst)" stroke="#2a2a1a" stroke-width="0.9" stroke-linejoin="round"/><path d="M16.4 5.6L18.4 11.4L24.2 12.4L19.4 16.2L20.4 22.4L15 19.2L8.6 21L10.8 15.4L7.2 10.8L13.4 11.4Z" fill="url(#gst)" stroke="#2a2a1a" stroke-width="0.9" stroke-linejoin="round"/></svg>
<svg style="left:13.0px;top:365.0px;" width="24" height="24" viewBox="0 0 24 24"><defs><linearGradient id="gbx" x1="0" y1="0" x2="1" y2="0.4"><stop offset="0" stop-color="#7a7ac0"/><stop offset="1" stop-color="#d0d0f4"/></linearGradient><linearGradient id="gbx2" x1="0" y1="0" x2="1" y2="1"><stop offset="0" stop-color="#34348c"/><stop offset="1" stop-color="#5a5ab0"/></linearGradient></defs><path d="M2.4 4.6L14 0.6L22.6 7.4V19L11.6 23.4L2.4 17Z" fill="#dcdcfa" stroke="#555" stroke-width="1" stroke-linejoin="round"/><path d="M2.4 4.6L14 0.6V14L2.4 17Z" fill="url(#gbx)"/><path d="M14 14L22.6 19L11.6 23.4L2.4 17Z" fill="url(#gbx2)"/><path d="M2.4 4.6L14 0.6L22.6 7.4V19L11.6 23.4L2.4 17Z" fill="none" stroke="#4a4a5a" stroke-width="1" stroke-linejoin="round"/></svg>
<svg style="left:13.0px;top:399.0px;" width="24" height="24" viewBox="0 0 24 24"><path d="M12 13.2C12.6 12 11 10.6 9.6 11.2C7.4 12.2 7.6 15.4 9.6 16.6C12.6 18.4 16.2 16 16.4 12.6C16.8 8.2 12.4 5.6 8.4 6.6C3.2 8 1 13.6 3 18C5.6 23.2 12.6 24.2 17.6 21.6M12 1C19 1 22.8 6.6 22.8 13C22.8 17 22.2 19.4 21.4 21.4M12 1C5.6 1 1 6 1 12.4" fill="none" stroke="#111" stroke-width="1.05"/></svg>
<svg style="left:13.0px;top:446.0px;" width="24" height="24" viewBox="0 0 24 24"><defs><linearGradient id="gpen" x1="0" y1="0" x2="1" y2="1"><stop offset="0" stop-color="#a8d0ee"/><stop offset="1" stop-color="#2a6aa8"/></linearGradient></defs><path d="M13.8 2.2H1.4C6 6 10.6 11 9.8 16C9.4 19 7.6 21 5 22.2" fill="none" stroke="#111" stroke-width="1"/><path d="M4.4 23.2H10.4" stroke="#111" stroke-width="1"/><rect x="0.6" y="20.8" width="4" height="4" fill="#fff" stroke="#000" stroke-width="1.1"/><circle cx="11.4" cy="23.4" r="1.2" fill="#fff" stroke="#000" stroke-width="1"/><path d="M17 0.8L24 5L20.6 12L14 9Z" fill="url(#gpen)" stroke="#3a5a7a" stroke-width="0.6"/><path d="M14.4 9L20.4 11.8L18.4 14.4L14.2 12.4Z" fill="#f0b838" stroke="#5a4a1a" stroke-width="0.6"/><path d="M14.6 12.6L17.8 14.2L13 20.8L12 20.2Z" fill="#ddd" stroke="#333" stroke-width="0.7"/></svg>
<svg style="left:13.0px;top:480.0px;" width="24" height="24" viewBox="0 0 24 24"><defs><linearGradient id="gpc" x1="0" y1="0" x2="1" y2="0.3"><stop offset="0" stop-color="#ffe860"/><stop offset="1" stop-color="#f08a10"/></linearGradient></defs><path d="M1.4 2.6C4 0.8 7 1.6 6.2 4.4C5.4 7 2 9.2 1.8 11.6C1.6 13.4 4.6 12.4 6.4 12C6 15.4 6.2 19 8.4 21.4C11.4 24 17.6 21.6 20 17.4" fill="none" stroke="#111" stroke-width="1"/><path d="M16.6 0.6L23.4 5.2L19.4 13.6L12.6 9.4Z" fill="url(#gpc)" stroke="#6a4a10" stroke-width="0.6"/><path d="M12.6 9.4L19.4 13.6L12.2 20.6L11 20Z" fill="#fff" stroke="#333" stroke-width="0.7"/><path d="M11.4 17.8L13.6 19.2L11.6 21Z" fill="#222"/></svg>
<svg style="left:13.0px;top:514.0px;" width="24" height="24" viewBox="0 0 24 24"><path d="M0.6 0.6C5.6 1.2 8.6 3 8.4 8.4C8.2 13.4 6 18.6 10.2 20.2C14 21.6 17.6 17.8 22.4 19.2C19 20 16.4 23.4 11.6 23.4C4.6 23.4 3.4 17.6 4 11.6C4.4 7 4.6 3.2 0.6 0.6Z" fill="#0a0a0a"/><path d="M14.8 0.8L23.4 3L21.8 8.4L13.6 6Z" fill="#4a88c0" stroke="#28507a" stroke-width="0.6"/><path d="M13.8 5.8L21.6 8.2L21 10L13.2 7.6Z" fill="#e01818"/><path d="M13.4 7.8L20.8 10.2C20.2 14.8 16 18.4 10.6 20.2C10 15 11 11 13.4 7.8Z" fill="#f8d860" stroke="#2a2210" stroke-width="0.9"/><path d="M15.8 11.8L11.4 19.4" stroke="#2a2210" stroke-width="0.8"/><circle cx="15.8" cy="11.8" r="1" fill="#2a2210"/></svg>
<svg style="left:13.0px;top:548.0px;" width="24" height="24" viewBox="0 0 24 24"><text x="0.6" y="22.2" font-family="'Liberation Sans',sans-serif" font-weight="700" font-size="27.5" fill="#050505" stroke="#050505" stroke-width="0.9" textLength="19" lengthAdjust="spacingAndGlyphs">A</text><path d="M18.8 1.4H23.2M18.8 23.4H23.2M21 1.4V23.4" stroke="#222" stroke-width="0.9" fill="none"/></svg>
<svg style="left:13.0px;top:597.0px;" width="24" height="24" viewBox="0 0 24 24"><defs><linearGradient id="ggr" x1="0" y1="0" x2="1" y2="1"><stop offset="0" stop-color="#3aa050"/><stop offset="0.5" stop-color="#f4fbf4"/><stop offset="1" stop-color="#3aa050"/></linearGradient></defs><rect x="1" y="1" width="22" height="22" fill="url(#ggr)"/><path d="M5.6 6.6L18.4 17.4" stroke="#333" stroke-width="1.3"/><rect x="3.6" y="4.6" width="4" height="4" rx="0.6" fill="#fff" stroke="#333" stroke-width="1"/><rect x="16.4" y="15.4" width="4" height="4" rx="0.6" fill="#fff" stroke="#333" stroke-width="1"/></svg>
<svg style="left:13.0px;top:631.0px;" width="24" height="24" viewBox="0 0 24 24"><defs><linearGradient id="gms" x1="0" y1="0" x2="1" y2="1"><stop offset="0" stop-color="#5a9aa8"/><stop offset="1" stop-color="#5ab07a"/></linearGradient></defs><path d="M4.4 4.6C9 1.8 14 6.8 19.6 4.4C22.4 9.4 17.6 14.6 19.8 19.6C14.6 22 9.4 17.4 4.4 19.6C2 14.6 6.8 9.6 4.4 4.6Z" fill="url(#gms)" stroke="#3a5a5a" stroke-width="0.7"/><rect x="2.4" y="2.4" width="4" height="4" fill="#fff" stroke="#000" stroke-width="1.1"/><rect x="17.6" y="2.4" width="4" height="4" fill="#fff" stroke="#000" stroke-width="1.1"/><rect x="2.4" y="17.6" width="4" height="4" fill="#fff" stroke="#000" stroke-width="1.1"/><rect x="17.6" y="17.6" width="4" height="4" fill="#fff" stroke="#000" stroke-width="1.1"/></svg>
<svg style="left:13.0px;top:665.0px;" width="24" height="24" viewBox="0 0 24 24"><path d="M15 8.6L17.6 11.2L6.6 21.4L4.4 21.8L4.8 19.6Z" fill="#cfe0f4" stroke="#2a3a5a" stroke-width="0.9"/><path d="M9 15.4L6 19.6" stroke="#5a82c0" stroke-width="1.6"/><path d="M13 6.4L19.6 12.6" stroke="#000" stroke-width="2.6" stroke-linecap="round"/><path d="M16.4 8.8L20.6 3.8" stroke="#000" stroke-width="5.6" stroke-linecap="round"/><path d="M18.6 4.4L20.6 2.8" stroke="#777" stroke-width="0.9" stroke-linecap="round"/><path d="M4.2 21.6C5.6 23.2 5.4 24.8 4.2 25C2.8 25 2.6 23.2 4.2 21.6Z" fill="#8ab0e0" stroke="#2a4a8a" stroke-width="0.7"/></svg>
<svg style="left:13.0px;top:699.0px;" width="24" height="24" viewBox="0 0 24 24"><defs><linearGradient id="gbk" x1="0" y1="0" x2="1" y2="1"><stop offset="0" stop-color="#c8e4f4"/><stop offset="1" stop-color="#2a6aa0"/></linearGradient></defs><ellipse cx="11.4" cy="22" rx="10.6" ry="2.2" fill="#a8e0a8" stroke="#1a6a2a" stroke-width="0.9"/><path d="M5.4 8.8C3.8 12.6 8.6 15.6 10.4 21.6L12.6 21.4C11.6 16 9.4 12.4 5.4 8.8Z" fill="#7ad08a" stroke="#1a6a2a" stroke-width="0.8"/><path d="M4.8 8.6L18.6 2.4L23.4 12L10.6 18.6Z" fill="url(#gbk)" stroke="#0a0a0a" stroke-width="1.1" stroke-linejoin="round"/><path d="M4.8 8.6C5.4 6.8 6.8 7.4 8 9.6C9.8 13 10.8 16.6 10.6 18.6" fill="#5aa86a" stroke="#0a0a0a" stroke-width="0.9"/><path d="M8.4 4.8C8.6 1 11.6 1.2 12.2 12" fill="none" stroke="#333" stroke-width="0.9"/><circle cx="12.2" cy="12.4" r="1.3" fill="#ddd" stroke="#222" stroke-width="0.8"/></svg>
<div style="left:4px;top:251px;width:43px;height:1px;background:#dedad6;"></div>
<div style="left:4px;top:435px;width:43px;height:1px;background:#dedad6;"></div>
<div style="left:4px;top:585px;width:43px;height:1px;background:#dedad6;"></div>
<div style="left:4px;top:735px;width:43px;height:1px;background:#dedad6;"></div>
<svg style="left:23.5px;top:766.5px" width="6" height="11" viewBox="0 0 6 11"><path d="M0 0L6 5.5L0 11Z" fill="#2e3436"/></svg>
<div style="left:70px;top:191px;width:1090px;height:583px;background:#fff;"></div>
<div style="left:476.6px;top:287.6px;width:279px;height:394px;background:#666;"></div>
<div style="left:475px;top:286px;width:278px;height:393px;background:#fff;border:1px solid #666;box-sizing:border-box;"></div>
<svg style="left:500px;top:290px" width="260" height="50" viewBox="500 290 260 50"><rect x="519.5" y="308.5" width="224" height="12" fill="#fff" stroke="#000" stroke-width="1.1"/><rect x="518.5" y="307.5" width="226" height="14" fill="none" stroke="#2222cc" stroke-width="1" stroke-dasharray="3 3" opacity="0.8"/></svg>
<svg style="left:500px;top:290px" width="260" height="50" viewBox="500 290 260 50"><defs><path id="h-diag" d="M-5.5 -5.5H1L-1 -3.5L3.5 1L5.5 -1V5.5H-1L1 3.5L-3.5 -1L-5.5 1Z"/><path id="h-str" d="M-6.5 0L-2 -4.5V-1.5H2V-4.5L6.5 0L2 4.5V1.5H-2V4.5Z"/><clipPath id="hclip"><rect x="752.6" y="290" width="3.4" height="50"/></clipPath></defs><g fill="#000"><use href="#h-diag" transform="translate(512.5 301.5) rotate(0)"/><use href="#h-diag" transform="translate(749.5 301.5) rotate(90)"/><use href="#h-diag" transform="translate(512.5 327.5) rotate(90)"/><use href="#h-diag" transform="translate(749.5 327.5) rotate(0)"/><use href="#h-str" transform="translate(631.5 301.5) rotate(90)"/><use href="#h-str" transform="translate(631.5 327.8) rotate(90)"/><use href="#h-str" transform="translate(512.2 314.5) rotate(0)"/><use href="#h-str" transform="translate(750 314.5) rotate(0)"/></g><g fill="#b4b4b4" clip-path="url(#hclip)"><use href="#h-diag" transform="translate(512.5 301.5) rotate(0)"/><use href="#h-diag" transform="translate(749.5 301.5) rotate(90)"/><use href="#h-diag" transform="translate(512.5 327.5) rotate(90)"/><use href="#h-diag" transform="translate(749.5 327.5) rotate(0)"/><use href="#h-str" transform="translate(631.5 301.5) rotate(90)"/><use href="#h-str" transform="translate(631.5 327.8) rotate(90)"/><use href="#h-str" transform="translate(512.2 314.5) rotate(0)"/><use href="#h-str" transform="translate(750 314.5) rotate(0)"/></g></svg>
<div style="left:50px;top:172px;width:1110px;height:19px;background:#f6f5f4;"></div>
<div style="left:50px;top:191px;width:20px;height:583px;background:#f6f5f4;"></div>
<svg style="left:0;top:0" width="1600" height="900" viewBox="0 0 1600 900"><g fill="#2e3436" shape-rendering="crispEdges"><rect x="72" y="185" width="1" height="5"/><rect x="81" y="181" width="1" height="9"/><rect x="90" y="185" width="1" height="5"/><rect x="98" y="185" width="1" height="5"/><rect x="107" y="185" width="1" height="5"/><rect x="116" y="185" width="1" height="5"/><rect x="125" y="173" width="1" height="17"/><rect x="133" y="185" width="1" height="5"/><rect x="142" y="185" width="1" height="5"/><rect x="151" y="185" width="1" height="5"/><rect x="160" y="185" width="1" height="5"/><rect x="168" y="181" width="1" height="9"/><rect x="177" y="185" width="1" height="5"/><rect x="186" y="185" width="1" height="5"/><rect x="195" y="185" width="1" height="5"/><rect x="203" y="185" width="1" height="5"/><rect x="212" y="173" width="1" height="17"/><rect x="221" y="185" width="1" height="5"/><rect x="230" y="185" width="1" height="5"/><rect x="238" y="185" width="1" height="5"/><rect x="247" y="185" width="1" height="5"/><rect x="256" y="181" width="1" height="9"/><rect x="265" y="185" width="1" height="5"/><rect x="273" y="185" width="1" height="5"/><rect x="282" y="185" width="1" height="5"/><rect x="291" y="185" width="1" height="5"/><rect x="300" y="173" width="1" height="17"/><rect x="308" y="185" width="1" height="5"/><rect x="317" y="185" width="1" height="5"/><rect x="326" y="185" width="1" height="5"/><rect x="335" y="185" width="1" height="5"/><rect x="343" y="181" width="1" height="9"/><rect x="352" y="185" width="1" height="5"/><rect x="361" y="185" width="1" height="5"/><rect x="370" y="185" width="1" height="5"/><rect x="378" y="185" width="1" height="5"/><rect x="387" y="173" width="1" height="17"/><rect x="396" y="185" width="1" height="5"/><rect x="405" y="185" width="1" height="5"/><rect x="413" y="185" width="1" height="5"/><rect x="422" y="185" width="1" height="5"/><rect x="431" y="181" width="1" height="9"/><rect x="440" y="185" width="1" height="5"/><rect x="448" y="185" width="1" height="5"/><rect x="457" y="185" width="1" height="5"/><rect x="466" y="185" width="1" height="5"/><rect x="475" y="173" width="1" height="17"/><rect x="483" y="185" width="1" height="5"/><rect x="492" y="185" width="1" height="5"/><rect x="501" y="185" width="1" height="5"/><rect x="510" y="185" width="1" height="5"/><rect x="518" y="181" width="1" height="9"/><rect x="527" y="185" width="1" height="5"/><rect x="536" y="185" width="1" height="5"/><rect x="545" y="185" width="1" height="5"/><rect x="553" y="185" width="1" height="5"/><rect x="562" y="173" width="1" height="17"/><rect x="571" y="185" width="1" height="5"/><rect x="580" y="185" width="1" height="5"/><rect x="588" y="185" width="1" height="5"/><rect x="597" y="185" width="1" height="5"/><rect x="606" y="181" width="1" height="9"/><rect x="615" y="185" width="1" height="5"/><rect x="623" y="185" width="1" height="5"/><rect x="632" y="185" width="1" height="5"/><rect x="641" y="185" width="1" height="5"/><rect x="650" y="173" width="1" height="17"/><rect x="658" y="185" width="1" height="5"/><rect x="667" y="185" width="1" height="5"/><rect x="676" y="185" width="1" height="5"/><rect x="685" y="185" width="1" height="5"/><rect x="693" y="181" width="1" height="9"/><rect x="702" y="185" width="1" height="5"/><rect x="711" y="185" width="1" height="5"/><rect x="720" y="185" width="1" height="5"/><rect x="728" y="185" width="1" height="5"/><rect x="737" y="173" width="1" height="17"/><rect x="746" y="185" width="1" height="5"/><rect x="755" y="185" width="1" height="5"/><rect x="763" y="185" width="1" height="5"/><rect x="772" y="185" width="1" height="5"/><rect x="781" y="181" width="1" height="9"/><rect x="790" y="185" width="1" height="5"/><rect x="798" y="185" width="1" height="5"/><rect x="807" y="185" width="1" height="5"/><rect x="816" y="185" width="1" height="5"/><rect x="825" y="173" width="1" height="17"/><rect x="833" y="185" width="1" height="5"/><rect x="842" y="185" width="1" height="5"/><rect x="851" y="185" width="1" height="5"/><rect x="860" y="185" width="1" height="5"/><rect x="868" y="181" width="1" height="9"/><rect x="877" y="185" width="1" height="5"/><rect x="886" y="185" width="1" height="5"/><rect x="895" y="185" width="1" height="5"/><rect x="903" y="185" width="1" height="5"/><rect x="912" y="173" width="1" height="17"/><rect x="921" y="185" width="1" height="5"/><rect x="930" y="185" width="1" height="5"/><rect x="938" y="185" width="1" height="5"/><rect x="947" y="185" width="1" height="5"/><rect x="956" y="181" width="1" height="9"/><rect x="965" y="185" width="1" height="5"/><rect x="973" y="185" width="1" height="5"/><rect x="982" y="185" width="1" height="5"/><rect x="991" y="185" width="1" height="5"/><rect x="1000" y="173" width="1" height="17"/><rect x="1008" y="185" width="1" height="5"/><rect x="1017" y="185" width="1" height="5"/><rect x="1026" y="185" width="1" height="5"/><rect x="1035" y="185" width="1" height="5"/><rect x="1043" y="181" width="1" height="9"/><rect x="1052" y="185" width="1" height="5"/><rect x="1061" y="185" width="1" height="5"/><rect x="1070" y="185" width="1" height="5"/><rect x="1078" y="185" width="1" height="5"/><rect x="1087" y="173" width="1" height="17"/><rect x="1096" y="185" width="1" height="5"/><rect x="1105" y="185" width="1" height="5"/><rect x="1113" y="185" width="1" height="5"/><rect x="1122" y="185" width="1" height="5"/><rect x="1131" y="181" width="1" height="9"/><rect x="1140" y="185" width="1" height="5"/><rect x="1148" y="185" width="1" height="5"/><rect x="1157" y="185" width="1" height="5"/><rect x="69" y="190" width="1091" height="1"/><rect x="52" y="198" width="18" height="1"/><rect x="64" y="207" width="6" height="1"/><rect x="64" y="216" width="6" height="1"/><rect x="64" y="225" width="6" height="1"/><rect x="64" y="233" width="6" height="1"/><rect x="60" y="242" width="10" height="1"/><rect x="64" y="251" width="6" height="1"/><rect x="64" y="260" width="6" height="1"/><rect x="64" y="268" width="6" height="1"/><rect x="64" y="277" width="6" height="1"/><rect x="52" y="286" width="18" height="1"/><rect x="64" y="295" width="6" height="1"/><rect x="64" y="303" width="6" height="1"/><rect x="64" y="312" width="6" height="1"/><rect x="64" y="321" width="6" height="1"/><rect x="60" y="330" width="10" height="1"/><rect x="64" y="338" width="6" height="1"/><rect x="64" y="347" width="6" height="1"/><rect x="64" y="356" width="6" height="1"/><rect x="64" y="364" width="6" height="1"/><rect x="52" y="373" width="18" height="1"/><rect x="64" y="382" width="6" height="1"/><rect x="64" y="391" width="6" height="1"/><rect x="64" y="399" width="6" height="1"/><rect x="64" y="408" width="6" height="1"/><rect x="60" y="417" width="10" height="1"/><rect x="64" y="426" width="6" height="1"/><rect x="64" y="434" width="6" height="1"/><rect x="64" y="443" width="6" height="1"/><rect x="64" y="452" width="6" height="1"/><rect x="52" y="461" width="18" height="1"/><rect x="64" y="469" width="6" height="1"/><rect x="64" y="478" width="6" height="1"/><rect x="64" y="487" width="6" height="1"/><rect x="64" y="496" width="6" height="1"/><rect x="60" y="504" width="10" height="1"/><rect x="64" y="513" width="6" height="1"/><rect x="64" y="522" width="6" height="1"/><rect x="64" y="531" width="6" height="1"/><rect x="64" y="539" width="6" height="1"/><rect x="52" y="548" width="18" height="1"/><rect x="64" y="557" width="6" height="1"/><rect x="64" y="565" width="6" height="1"/><rect x="64" y="574" width="6" height="1"/><rect x="64" y="583" width="6" height="1"/><rect x="60" y="592" width="10" height="1"/><rect x="64" y="600" width="6" height="1"/><rect x="64" y="609" width="6" height="1"/><rect x="64" y="618" width="6" height="1"/><rect x="64" y="627" width="6" height="1"/><rect x="52" y="635" width="18" height="1"/><rect x="64" y="644" width="6" height="1"/><rect x="64" y="653" width="6" height="1"/><rect x="64" y="662" width="6" height="1"/><rect x="64" y="670" width="6" height="1"/><rect x="60" y="679" width="10" height="1"/><rect x="64" y="688" width="6" height="1"/><rect x="64" y="697" width="6" height="1"/><rect x="64" y="705" width="6" height="1"/><rect x="64" y="714" width="6" height="1"/><rect x="52" y="723" width="18" height="1"/><rect x="64" y="732" width="6" height="1"/><rect x="64" y="740" width="6" height="1"/><rect x="64" y="749" width="6" height="1"/><rect x="64" y="758" width="6" height="1"/><rect x="60" y="767" width="10" height="1"/><rect x="69" y="190" width="1" height="584"/><path d="M716.5 186H725.5L721 190.5Z"/><path d="M64 414.5V422.5L69 418.5Z"/></g></svg>
<span style="left:127.6px;top:176px;font-size:9.3px;color:#41464a;letter-spacing:-0.30px;">-1000</span>
<span style="left:214.6px;top:176px;font-size:9.3px;color:#41464a;letter-spacing:-0.30px;">-750</span>
<span style="left:302.6px;top:176px;font-size:9.3px;color:#41464a;letter-spacing:-0.30px;">-500</span>
<span style="left:389.6px;top:176px;font-size:9.3px;color:#41464a;letter-spacing:-0.30px;">-250</span>
<span style="left:478.6px;top:176px;font-size:9.3px;color:#41464a;letter-spacing:-0.30px;">0</span>
<span style="left:564.6px;top:176px;font-size:9.3px;color:#41464a;letter-spacing:-0.30px;">250</span>
<span style="left:652.6px;top:176px;font-size:9.3px;color:#41464a;letter-spacing:-0.30px;">500</span>
<span style="left:739.6px;top:176px;font-size:9.3px;color:#41464a;letter-spacing:-0.30px;">750</span>
<span style="left:827.6px;top:176px;font-size:9.3px;color:#41464a;letter-spacing:-0.30px;">1000</span>
<span style="left:914.6px;top:176px;font-size:9.3px;color:#41464a;letter-spacing:-0.30px;">1250</span>
<span style="left:1002.6px;top:176px;font-size:9.3px;color:#41464a;letter-spacing:-0.30px;">1500</span>
<span style="left:1089.6px;top:176px;font-size:9.3px;color:#41464a;letter-spacing:-0.30px;">1750</span>
<div style="left:59.4px;top:205.29999999999998px;width:1.2px;height:1.4px;background:#2e3436;"></div>
<span style="left:57.2px;top:208px;font-size:9.3px;color:#41464a;">2</span>
<span style="left:57.2px;top:216px;font-size:9.3px;color:#41464a;">5</span>
<span style="left:58.2px;top:224px;font-size:9.3px;color:#41464a;">0</span>
<span style="left:58.2px;top:289px;font-size:9.3px;color:#41464a;">0</span>
<span style="left:57.2px;top:376px;font-size:9.3px;color:#41464a;">2</span>
<span style="left:57.2px;top:384px;font-size:9.3px;color:#41464a;">5</span>
<span style="left:58.2px;top:392px;font-size:9.3px;color:#41464a;">0</span>
<span style="left:57.2px;top:464px;font-size:9.3px;color:#41464a;">5</span>
<span style="left:58.2px;top:472px;font-size:9.3px;color:#41464a;">0</span>
<span style="left:58.2px;top:480px;font-size:9.3px;color:#41464a;">0</span>
<span style="left:57.2px;top:551px;font-size:9.3px;color:#41464a;">7</span>
<span style="left:57.2px;top:559px;font-size:9.3px;color:#41464a;">5</span>
<span style="left:58.2px;top:567px;font-size:9.3px;color:#41464a;">0</span>
<span style="left:57.2px;top:638px;font-size:9.3px;color:#41464a;">1</span>
<span style="left:58.2px;top:646px;font-size:9.3px;color:#41464a;">0</span>
<span style="left:58.2px;top:655px;font-size:9.3px;color:#41464a;">0</span>
<span style="left:58.2px;top:663px;font-size:9.3px;color:#41464a;">0</span>
<span style="left:57.2px;top:726px;font-size:9.3px;color:#41464a;">1</span>
<span style="left:57.2px;top:734px;font-size:9.3px;color:#41464a;">2</span>
<span style="left:57.2px;top:742px;font-size:9.3px;color:#41464a;">5</span>
<span style="left:58.2px;top:750px;font-size:9.3px;color:#41464a;">0</span>
<svg style="left:52.0px;top:173.0px;" width="18" height="18" viewBox="0 0 18 18"><rect x="0.4" y="0.6" width="17.2" height="17" rx="3.4" fill="#faf9f8" stroke="#dedad6" stroke-width="0.8"/><path d="M5 8V5.6Q5 1.7 9 1.7Q13 1.7 13 5.6V8" fill="none" stroke="#111" stroke-width="1.4"/><rect x="2.7" y="7.6" width="12.6" height="8" rx="1" fill="url(#glock)" stroke="#3a3226" stroke-width="1.1"/><circle cx="9" cy="10.3" r="1.1" fill="#000"/><path d="M8.4 10.4H9.6V13H8.4Z" fill="#000"/></svg>
<div style="left:70px;top:774px;width:1090px;height:18px;background:#cfcfcf;"></div>
<div style="left:73px;top:780px;width:1084px;height:6px;background:#7c8082;border-radius:3px;"></div>
<div style="left:1160px;top:191px;width:19px;height:583px;background:#cfcfcf;"></div>
<div style="left:1166px;top:323px;width:6px;height:317px;background:#7c8082;border-radius:3px;"></div>
<div style="left:1161px;top:173.6px;width:16.6px;height:16.4px;background:linear-gradient(#fafafa,#e4e4e2);border:1px solid #bdb9b4;box-sizing:border-box;border-radius:3px;"></div>
<span style="left:1165.4px;top:178px;font-size:9.5px;color:#8a8a88;">1</span>
<div style="left:1160px;top:774px;width:19px;height:18px;background:#f6f5f4;"></div>
<div style="left:1160px;top:774px;width:18px;height:18px;background:#fbfaf9;border:1px solid #e4e0dc;box-sizing:border-box;border-radius:4px;"></div>
<svg style="left:1161.0px;top:775.0px;" width="16" height="16" viewBox="0 0 16 16"><defs><linearGradient id="gcm" x1="0.1" y1="0" x2="0.3" y2="1"><stop offset="0" stop-color="#b8f0b8"/><stop offset="0.6" stop-color="#c0f4f0"/><stop offset="1" stop-color="#d8c8f8"/></linearGradient><linearGradient id="gcm2" x1="0" y1="0.5" x2="1" y2="0.6"><stop offset="0.3" stop-color="#ffc0d8" stop-opacity="0"/><stop offset="1" stop-color="#ffb0c8"/></linearGradient></defs><path d="M2.6 1L14.6 10.6L4.2 15Z" fill="url(#gcm)"/><path d="M2.6 1L14.6 10.6L4.2 15Z" fill="url(#gcm2)"/></svg>
<div style="left:1179px;top:173px;width:421px;height:533px;background:#fff;"></div>
<div style="left:1599px;top:173px;width:1px;height:620px;background:#e4e2df;"></div>
<svg style="left:1179.0px;top:182.5px;" width="16" height="16" viewBox="0 0 16 16"><defs><linearGradient id="gfl1" x1="0" y1="0" x2="1" y2="0"><stop offset="0.3" stop-color="#000"/><stop offset="1" stop-color="#000" stop-opacity="0.25"/></linearGradient><linearGradient id="gfl2" x1="0" y1="0" x2="0" y2="1"><stop offset="0.3" stop-color="#000"/><stop offset="1" stop-color="#000" stop-opacity="0.2"/></linearGradient><linearGradient id="gfl3" x1="0" y1="0" x2="1" y2="1"><stop offset="0" stop-color="#ffe030"/><stop offset="1" stop-color="#f89010"/></linearGradient></defs><path d="M0 0H16L0 16Z" fill="#fff"/><rect x="0" y="0" width="16" height="2.2" fill="url(#gfl1)"/><rect x="0" y="0" width="2.2" height="16" fill="url(#gfl2)"/><path d="M0 16C1.6 13.6 3.4 11.2 5.6 9.8C8 8.2 10.6 5.4 13 2.6L15 6.8C13.4 8.4 11.4 10 10.2 11.8C9 14 7 15.4 4.4 16Z" fill="#050505"/><path d="M4.6 12.6L6.6 11.2M7.6 10.4L11 7.2" stroke="#bbb" stroke-width="1.1"/><path d="M11.8 4.4L16 1.2V9.6L13.6 7.4Z" fill="url(#gfl3)"/></svg>
<span style="left:1195.4px;top:184px;font-size:12.3px;letter-spacing:-0.07px;">Füllung und Kontur (Umschalt+Strg+F)</span>
<div style="left:1539px;top:180px;width:11px;height:11px;background:#fbfbfa;border:1px solid #9a9996;box-sizing:border-box;border-radius:2px;"></div>
<svg style="left:1541.5px;top:183px" width="6" height="5" viewBox="0 0 6 5"><path d="M5.5 0V5L0.5 2.5Z" fill="#8a8a88"/></svg>
<div style="left:1575px;top:180px;width:11px;height:11px;background:#fbfbfa;border:1px solid #9a9996;box-sizing:border-box;border-radius:2px;"></div>
<svg style="left:1577px;top:182px" width="7" height="7" viewBox="0 0 7 7"><path d="M0.7 0.7L6.3 6.3M6.3 0.7L0.7 6.3" stroke="#8a8a88" stroke-width="1.8" fill="none"/></svg>
<div style="left:1179px;top:207px;width:420px;height:499px;border:1px solid #d2cdc8;box-sizing:border-box;border-bottom:none;"></div>
<div style="left:1183px;top:211px;width:412px;height:366px;background:#fff;border:1px solid #cdc7c2;box-sizing:border-box;"></div>
<div style="left:1184px;top:212px;width:410px;height:36px;background:#e1dedb;"></div>
<div style="left:1184px;top:248px;width:410px;height:1px;background:#cdc7c2;"></div>
<div style="left:1431px;top:246px;width:148px;height:3px;background:#3584e4;"></div>
<div style="left:1204px;top:222px;width:16px;height:16px;background:linear-gradient(135deg,#9db6d8,#f4f7fb);opacity:.9"></div>
<span style="left:1223.8px;top:224px;font-size:12.3px;font-weight:700;color:#a4a3a1;letter-spacing:-0.70px;">Füllung</span>
<div style="left:1296px;top:222px;width:16px;height:16px;box-sizing:border-box;border:1.5px solid;border-color:#444 #bbb #bbb #444;background:#e1dedb;border-radius:1px"></div>
<span style="left:1315.6px;top:224px;font-size:12.3px;font-weight:700;color:#a4a3a1;letter-spacing:-0.31px;">Farbe der Kontur</span>
<svg style="left:1443.0px;top:222.0px;" width="16" height="16" viewBox="0 0 16 16"><path d="M0 3H11" stroke="#000" stroke-width="1.2"/><path d="M10.6 0.4L15.6 3L10.6 5.6Z" fill="#000"/><path d="M0 8.2H15.6" stroke="#222" stroke-width="1.6" stroke-dasharray="2.6 1.4"/><path d="M0 13.6H15.8" stroke="#000" stroke-width="1.4"/></svg>
<span style="left:1462.6px;top:224px;font-size:12.3px;font-weight:700;letter-spacing:-0.10px;">Muster der Kontur</span>
<span style="left:1195.4px;top:268px;font-size:12.3px;letter-spacing:-0.13px;">Breite:</span>
<div style="left:1315px;top:257px;width:98px;height:34px;background:#fff;border:1px solid #cdc7c2;box-sizing:border-box;border-radius:5px;"></div>
<div style="left:1378px;top:258px;width:1px;height:32px;background:#ebe9e7;"></div>
<div style="left:1395px;top:258px;width:1px;height:32px;background:#ebe9e7;"></div>
<div style="left:1382px;top:273px;width:10px;height:2px;background:#2e3436;"></div>
<div style="left:1399px;top:273px;width:10px;height:2px;background:#2e3436;"></div>
<div style="left:1403px;top:269px;width:2px;height:10px;background:#2e3436;"></div>
<span class="fD" style="left:1317.8px;top:268px;font-size:12px;letter-spacing:0.20px;">0,969</span>
<div style="left:1417px;top:257px;width:62px;height:34px;background:linear-gradient(#f8f7f6,#edebe9);border:1px solid #cdc7c2;box-sizing:border-box;border-radius:5px;box-shadow:0 1px 1px rgba(0,0,0,0.06);"></div>
<span style="left:1428.6px;top:268px;font-size:12.3px;letter-spacing:0.50px;">mm</span>
<svg style="left:1456.0px;top:271.5px" width="10" height="5" viewBox="0 0 10 5"><path d="M0 0H10L5.0 5Z" fill="#2e3436"/></svg>
<span style="left:1195.4px;top:306px;font-size:12.3px;letter-spacing:-0.07px;">Strichlinien:</span>
<div style="left:1315px;top:295px;width:148px;height:34px;background:linear-gradient(#f8f7f6,#edebe9);border:1px solid #cdc7c2;box-sizing:border-box;border-radius:5px;box-shadow:0 1px 1px rgba(0,0,0,0.06);"></div>
<div style="left:1341px;top:311px;width:80px;height:2px;background:#000;"></div>
<svg style="left:1439.6px;top:309.5px" width="10" height="5" viewBox="0 0 10 5"><path d="M0 0H10L5.0 5Z" fill="#2e3436"/></svg>
<div style="left:1467px;top:295px;width:74px;height:34px;background:#fff;border:1px solid #cdc7c2;box-sizing:border-box;border-radius:5px;"></div>
<div style="left:1506px;top:296px;width:1px;height:32px;background:#ebe9e7;"></div>
<div style="left:1523px;top:296px;width:1px;height:32px;background:#ebe9e7;"></div>
<div style="left:1510px;top:311px;width:10px;height:2px;background:#d3d2d0;"></div>
<div style="left:1527px;top:311px;width:10px;height:2px;background:#2e3436;"></div>
<div style="left:1531px;top:307px;width:2px;height:10px;background:#2e3436;"></div>
<span class="fD" style="left:1469.8px;top:306px;font-size:12px;letter-spacing:0.27px;">0,00</span>
<span style="left:1195.4px;top:344px;font-size:12.3px;letter-spacing:-0.10px;">Knotenmarkierungen:</span>
<div style="left:1315px;top:333px;width:73px;height:34px;background:linear-gradient(#f8f7f6,#edebe9);border:1px solid #cdc7c2;box-sizing:border-box;border-radius:5px;box-shadow:0 1px 1px rgba(0,0,0,0.06);"></div>
<svg style="left:1365.0000000000002px;top:347.5px" width="10" height="5" viewBox="0 0 10 5"><path d="M0 0H10L5.0 5Z" fill="#2e3436"/></svg>
<div style="left:1392px;top:333px;width:73px;height:34px;background:linear-gradient(#f8f7f6,#edebe9);border:1px solid #cdc7c2;box-sizing:border-box;border-radius:5px;box-shadow:0 1px 1px rgba(0,0,0,0.06);"></div>
<svg style="left:1442.0000000000002px;top:347.5px" width="10" height="5" viewBox="0 0 10 5"><path d="M0 0H10L5.0 5Z" fill="#2e3436"/></svg>
<div style="left:1469px;top:333px;width:72px;height:34px;background:linear-gradient(#f8f7f6,#edebe9);border:1px solid #cdc7c2;box-sizing:border-box;border-radius:5px;box-shadow:0 1px 1px rgba(0,0,0,0.06);"></div>
<svg style="left:1518.0000000000002px;top:347.5px" width="10" height="5" viewBox="0 0 10 5"><path d="M0 0H10L5.0 5Z" fill="#2e3436"/></svg>
<span style="left:1196.4px;top:382px;font-size:12.3px;letter-spacing:-0.08px;">Verbindung:</span>
<div style="left:1315px;top:371px;width:44px;height:34px;background:linear-gradient(#f8f7f6,#edebe9);border:1px solid #cdc7c2;box-sizing:border-box;border-radius:5px;box-shadow:0 1px 1px rgba(0,0,0,0.06);"></div>
<svg style="left:1325.0px;top:376.0px;" width="24" height="24" viewBox="0 0 24 24"><path d="M24 0.6H11Q0.6 0.6 0.6 11V24H17.4V17.4H24Z" fill="#9ab5d6"/><path d="M24 0.6H11Q0.6 0.6 0.6 11V24M17.4 24V17.4H24" fill="none" stroke="#000" stroke-width="1.2"/><rect x="8" y="8" width="2" height="2" fill="#fff"/><rect x="12" y="8" width="2" height="2" fill="#fff"/><rect x="16" y="8" width="2" height="2" fill="#fff"/><rect x="20" y="8" width="2" height="2" fill="#fff"/><rect x="8" y="12" width="2" height="2" fill="#fff"/><rect x="8" y="16" width="2" height="2" fill="#fff"/><rect x="8" y="20" width="2" height="2" fill="#fff"/></svg>
<div style="left:1363px;top:371px;width:44px;height:34px;background:#d6d1cd;border:1px solid #d0cbc6;box-sizing:border-box;border-radius:5px;"></div>
<svg style="left:1373.0px;top:376.0px;" width="24" height="24" viewBox="0 0 24 24"><path d="M24 0.6H11L0.6 11V24H17.4V17.4H24Z" fill="#9ab5d6"/><path d="M24 0.6H11L0.6 11V24M17.4 24V17.4H24" fill="none" stroke="#000" stroke-width="1.2"/><rect x="8" y="8" width="2" height="2" fill="#fff"/><rect x="12" y="8" width="2" height="2" fill="#fff"/><rect x="16" y="8" width="2" height="2" fill="#fff"/><rect x="20" y="8" width="2" height="2" fill="#fff"/><rect x="8" y="12" width="2" height="2" fill="#fff"/><rect x="8" y="16" width="2" height="2" fill="#fff"/><rect x="8" y="20" width="2" height="2" fill="#fff"/></svg>
<div style="left:1411px;top:371px;width:44px;height:34px;background:linear-gradient(#f8f7f6,#edebe9);border:1px solid #cdc7c2;box-sizing:border-box;border-radius:5px;box-shadow:0 1px 1px rgba(0,0,0,0.06);"></div>
<svg style="left:1421.0px;top:376.0px;" width="24" height="24" viewBox="0 0 24 24"><path d="M24 0.6H0.6V24H17.4V17.4H24Z" fill="#9ab5d6"/><path d="M24 0.6H0.6V24M17.4 24V17.4H24" fill="none" stroke="#000" stroke-width="1.2"/><rect x="8" y="8" width="2" height="2" fill="#fff"/><rect x="12" y="8" width="2" height="2" fill="#fff"/><rect x="16" y="8" width="2" height="2" fill="#fff"/><rect x="20" y="8" width="2" height="2" fill="#fff"/><rect x="8" y="12" width="2" height="2" fill="#fff"/><rect x="8" y="16" width="2" height="2" fill="#fff"/><rect x="8" y="20" width="2" height="2" fill="#fff"/></svg>
<div style="left:1459px;top:371px;width:82px;height:34px;background:#fafaf9;border:1px solid #cdc7c2;box-sizing:border-box;border-radius:5px;"></div>
<div style="left:1506px;top:372px;width:1px;height:32px;background:#ebe9e7;"></div>
<div style="left:1523px;top:372px;width:1px;height:32px;background:#ebe9e7;"></div>
<div style="left:1510px;top:387px;width:10px;height:2px;background:#d3d2d0;"></div>
<div style="left:1527px;top:387px;width:10px;height:2px;background:#d3d2d0;"></div>
<div style="left:1531px;top:383px;width:2px;height:10px;background:#d3d2d0;"></div>
<span class="fD" style="left:1461.8px;top:382px;font-size:12px;color:#b4b3b1;letter-spacing:0.27px;">4,00</span>
<span style="left:1195.4px;top:420px;font-size:12.3px;letter-spacing:-0.18px;">Linienende:</span>
<div style="left:1315px;top:409px;width:44px;height:34px;background:#d6d1cd;border:1px solid #d0cbc6;box-sizing:border-box;border-radius:5px;"></div>
<svg style="left:1325.0px;top:414.0px;" width="24" height="24" viewBox="0 0 24 24"><path d="M3.6 24V9.6H20.4V24Z" fill="#9ab5d6"/><path d="M3.6 24V9.6H20.4V24" fill="none" stroke="#000" stroke-width="1.2"/><rect x="11" y="10" width="2" height="2" fill="#fff"/><rect x="11" y="14" width="2" height="2" fill="#fff"/><rect x="11" y="18" width="2" height="2" fill="#fff"/><rect x="11" y="22" width="2" height="2" fill="#fff"/></svg>
<div style="left:1363px;top:409px;width:44px;height:34px;background:linear-gradient(#f8f7f6,#edebe9);border:1px solid #cdc7c2;box-sizing:border-box;border-radius:5px;box-shadow:0 1px 1px rgba(0,0,0,0.06);"></div>
<svg style="left:1373.0px;top:414.0px;" width="24" height="24" viewBox="0 0 24 24"><path d="M3.6 24V9Q3.6 0.6 12 0.6Q20.4 0.6 20.4 9V24Z" fill="#9ab5d6"/><path d="M3.6 24V9Q3.6 0.6 12 0.6Q20.4 0.6 20.4 9V24" fill="none" stroke="#000" stroke-width="1.2"/><rect x="11" y="10" width="2" height="2" fill="#fff"/><rect x="11" y="14" width="2" height="2" fill="#fff"/><rect x="11" y="18" width="2" height="2" fill="#fff"/><rect x="11" y="22" width="2" height="2" fill="#fff"/></svg>
<div style="left:1411px;top:409px;width:44px;height:34px;background:linear-gradient(#f8f7f6,#edebe9);border:1px solid #cdc7c2;box-sizing:border-box;border-radius:5px;box-shadow:0 1px 1px rgba(0,0,0,0.06);"></div>
<svg style="left:1421.0px;top:414.0px;" width="24" height="24" viewBox="0 0 24 24"><path d="M3.6 24V0.6H20.4V24Z" fill="#9ab5d6"/><path d="M3.6 24V0.6H20.4V24" fill="none" stroke="#000" stroke-width="1.2"/><rect x="11" y="10" width="2" height="2" fill="#fff"/><rect x="11" y="14" width="2" height="2" fill="#fff"/><rect x="11" y="18" width="2" height="2" fill="#fff"/><rect x="11" y="22" width="2" height="2" fill="#fff"/></svg>
<span style="left:1196.4px;top:458px;font-size:12.3px;">Anordnung:</span>
<div style="left:1315px;top:447px;width:44px;height:34px;background:linear-gradient(#f8f7f6,#edebe9);border:1px solid #cdc7c2;box-sizing:border-box;border-radius:5px;box-shadow:0 1px 1px rgba(0,0,0,0.06);"></div>
<svg style="left:1325.0px;top:452.0px;" width="24" height="24" viewBox="0 0 24 24"><path d="M5.6 24V5.6H24V24Z" fill="#9ab5d6"/><path d="M5.6 24V5.6H24" fill="none" stroke="#000" stroke-width="1.2"/><rect x="9" y="9" width="2" height="2" fill="#fff"/><rect x="13" y="9" width="2" height="2" fill="#fff"/><rect x="17" y="9" width="2" height="2" fill="#fff"/><rect x="21" y="9" width="2" height="2" fill="#fff"/><rect x="9" y="13" width="2" height="2" fill="#fff"/><rect x="9" y="17" width="2" height="2" fill="#fff"/><rect x="9" y="21" width="2" height="2" fill="#fff"/><path d="M15 24V15H24V24Z" fill="#4a76aa"/><path d="M14.6 24V14.6H24" fill="none" stroke="#000" stroke-width="1.2"/><circle cx="10" cy="10" r="9.3" fill="#cddbee" stroke="#000" stroke-width="1.2"/></svg>
<div style="left:1363px;top:447px;width:44px;height:34px;background:linear-gradient(#f8f7f6,#edebe9);border:1px solid #cdc7c2;box-sizing:border-box;border-radius:5px;box-shadow:0 1px 1px rgba(0,0,0,0.06);"></div>
<svg style="left:1373.0px;top:452.0px;" width="24" height="24" viewBox="0 0 24 24"><path d="M5.6 24V5.6H24V24Z" fill="#9ab5d6"/><path d="M5.6 24V5.6H24" fill="none" stroke="#000" stroke-width="1.2"/><rect x="9" y="9" width="2" height="2" fill="#fff"/><rect x="13" y="9" width="2" height="2" fill="#fff"/><rect x="17" y="9" width="2" height="2" fill="#fff"/><rect x="21" y="9" width="2" height="2" fill="#fff"/><rect x="9" y="13" width="2" height="2" fill="#fff"/><rect x="9" y="17" width="2" height="2" fill="#fff"/><rect x="9" y="21" width="2" height="2" fill="#fff"/><path d="M10 24V10H24V24Z" fill="#4a76aa"/><circle cx="10" cy="10" r="9.3" fill="#cddbee" stroke="#000" stroke-width="1.2"/></svg>
<div style="left:1411px;top:447px;width:44px;height:34px;background:linear-gradient(#f8f7f6,#edebe9);border:1px solid #cdc7c2;box-sizing:border-box;border-radius:5px;box-shadow:0 1px 1px rgba(0,0,0,0.06);"></div>
<svg style="left:1421.0px;top:452.0px;" width="24" height="24" viewBox="0 0 24 24"><circle cx="10" cy="10" r="9.3" fill="#cddbee" stroke="#000" stroke-width="1.2"/><path d="M5.6 24V5.6H24V24Z" fill="#9ab5d6"/><path d="M5.6 24V5.6H24" fill="none" stroke="#000" stroke-width="1.2"/><rect x="9" y="9" width="2" height="2" fill="#fff"/><rect x="13" y="9" width="2" height="2" fill="#fff"/><rect x="17" y="9" width="2" height="2" fill="#fff"/><rect x="21" y="9" width="2" height="2" fill="#fff"/><rect x="9" y="13" width="2" height="2" fill="#fff"/><rect x="9" y="17" width="2" height="2" fill="#fff"/><rect x="9" y="21" width="2" height="2" fill="#fff"/><path d="M15 24V15H24V24Z" fill="#4a76aa"/><path d="M14.6 24V14.6H24" fill="none" stroke="#000" stroke-width="1.2"/></svg>
<div style="left:1315px;top:485px;width:44px;height:34px;background:linear-gradient(#f8f7f6,#edebe9);border:1px solid #cdc7c2;box-sizing:border-box;border-radius:5px;box-shadow:0 1px 1px rgba(0,0,0,0.06);"></div>
<svg style="left:1325.0px;top:490.0px;" width="24" height="24" viewBox="0 0 24 24"><circle cx="10" cy="10" r="9.3" fill="#cddbee" stroke="#000" stroke-width="1.2"/><path d="M5.6 24V5.6H24V24Z" fill="#9ab5d6"/><path d="M5.6 24V5.6H24" fill="none" stroke="#000" stroke-width="1.2"/><rect x="9" y="9" width="2" height="2" fill="#fff"/><rect x="13" y="9" width="2" height="2" fill="#fff"/><rect x="17" y="9" width="2" height="2" fill="#fff"/><rect x="21" y="9" width="2" height="2" fill="#fff"/><rect x="9" y="13" width="2" height="2" fill="#fff"/><rect x="9" y="17" width="2" height="2" fill="#fff"/><rect x="9" y="21" width="2" height="2" fill="#fff"/><path d="M15 24V15H24V24Z" fill="#4a76aa"/><path d="M14.6 24V14.6H24" fill="none" stroke="#000" stroke-width="1.2"/></svg>
<div style="left:1363px;top:485px;width:44px;height:34px;background:#d6d1cd;border:1px solid #d0cbc6;box-sizing:border-box;border-radius:5px;"></div>
<svg style="left:1373.0px;top:490.0px;" width="24" height="24" viewBox="0 0 24 24"><path d="M5.6 24V5.6H24V24Z" fill="#9ab5d6"/><path d="M5.6 24V5.6H24" fill="none" stroke="#000" stroke-width="1.2"/><rect x="9" y="9" width="2" height="2" fill="#fff"/><rect x="13" y="9" width="2" height="2" fill="#fff"/><rect x="17" y="9" width="2" height="2" fill="#fff"/><rect x="21" y="9" width="2" height="2" fill="#fff"/><rect x="9" y="13" width="2" height="2" fill="#fff"/><rect x="9" y="17" width="2" height="2" fill="#fff"/><rect x="9" y="21" width="2" height="2" fill="#fff"/><circle cx="10" cy="10" r="9.3" fill="#cddbee" stroke="#000" stroke-width="1.2"/><path d="M10 24V10H24V24Z" fill="#4a76aa"/></svg>
<div style="left:1411px;top:485px;width:44px;height:34px;background:linear-gradient(#f8f7f6,#edebe9);border:1px solid #cdc7c2;box-sizing:border-box;border-radius:5px;box-shadow:0 1px 1px rgba(0,0,0,0.06);"></div>
<svg style="left:1421.0px;top:490.0px;" width="24" height="24" viewBox="0 0 24 24"><circle cx="10" cy="10" r="9.3" fill="#cddbee" stroke="#000" stroke-width="1.2"/><path d="M5.6 24V5.6H24V24Z" fill="#9ab5d6"/><path d="M5.6 24V5.6H24" fill="none" stroke="#000" stroke-width="1.2"/><rect x="9" y="9" width="2" height="2" fill="#fff"/><rect x="13" y="9" width="2" height="2" fill="#fff"/><rect x="17" y="9" width="2" height="2" fill="#fff"/><rect x="21" y="9" width="2" height="2" fill="#fff"/><rect x="9" y="13" width="2" height="2" fill="#fff"/><rect x="9" y="17" width="2" height="2" fill="#fff"/><rect x="9" y="21" width="2" height="2" fill="#fff"/><path d="M10 24V10H24V24Z" fill="#4a76aa"/><path d="M10 24V10H24" fill="none" stroke="#fff" stroke-width="1" stroke-dasharray="2.4 1.6"/></svg>
<span style="left:1320.6px;top:595px;font-size:12.3px;letter-spacing:0.10px;">Mischmodus:</span>
<div style="left:1403px;top:584px;width:182px;height:34px;background:linear-gradient(#f8f7f6,#edebe9);border:1px solid #cdc7c2;box-sizing:border-box;border-radius:5px;box-shadow:0 1px 1px rgba(0,0,0,0.06);"></div>
<span style="left:1414.4px;top:595px;font-size:12.3px;letter-spacing:0.28px;">Normal</span>
<svg style="left:1562.0px;top:598.5px" width="10" height="5" viewBox="0 0 10 5"><path d="M0 0H10L5.0 5Z" fill="#2e3436"/></svg>
<div style="left:1183px;top:626px;width:412px;height:1px;background:#e6e4e1;"></div>
<div style="left:1183px;top:635px;width:340px;height:32px;background:#e1dedb;border-top:1px solid #cdc7c2;border-radius:3px 3px 0 0;box-sizing:border-box;"></div>
<div style="left:1183px;top:635px;width:1.4px;height:32px;background:#3584e4;"></div>
<span style="left:1187.6px;top:646px;font-size:12.3px;color:#111;letter-spacing:-0.33px;">Unschärfe (%)</span>
<span class="fD" style="left:1524.8px;top:645px;font-size:12px;color:#111;letter-spacing:0.40px;">0,0</span>
<div style="left:1183px;top:667px;width:340px;height:32px;background:#3584e4;border-top:1px solid #1b6acb;border-radius:0 0 3px 3px;box-sizing:border-box;"></div>
<span style="left:1187.6px;top:678px;font-size:12.3px;color:#fff;letter-spacing:-0.25px;">Deckkraft (%)</span>
<span class="fD" style="left:1524.8px;top:677px;font-size:12px;color:#111;letter-spacing:0.20px;">100,0</span>
<div style="left:1561px;top:635px;width:1px;height:64px;background:#ebe9e7;"></div>
<div style="left:1578.4px;top:635px;width:1px;height:64px;background:#ebe9e7;"></div>
<div style="left:1565px;top:650px;width:10px;height:2px;background:#d3d2d0;"></div>
<div style="left:1582px;top:650px;width:10px;height:2px;background:#2e3436;"></div>
<div style="left:1586px;top:646px;width:2px;height:10px;background:#2e3436;"></div>
<div style="left:1565px;top:682px;width:10px;height:2px;background:#2e3436;"></div>
<div style="left:1582px;top:682px;width:10px;height:2px;background:#d3d2d0;"></div>
<div style="left:1586px;top:678px;width:2px;height:10px;background:#d3d2d0;"></div>
<div style="left:1179px;top:705px;width:421px;height:1px;background:#d5d0cc;"></div>
<div style="left:1180px;top:706px;width:419px;height:32px;background:linear-gradient(#f4f3f2,#efeeed);border-radius:5px 5px 0 0;"></div>
<div style="left:1180px;top:738px;width:419px;height:1px;background:#cdc7c2;"></div>
<div style="left:1180px;top:739px;width:419px;height:34px;background:#d6d1cd;"></div>
<div style="left:1180px;top:773px;width:419px;height:1px;background:#cdc7c2;"></div>
<div style="left:1180px;top:774px;width:419px;height:18px;background:#f4f3f2;"></div>
<svg style="left:1189.0px;top:714.0px;" width="16" height="16" viewBox="0 0 16 16"><path d="M0.5 0V16" stroke="#e0101c" stroke-width="1.2"/><rect x="2.7" y="0.6" width="5.8" height="3.6" rx="0.5" fill="#a9c0de" stroke="#111" stroke-width="1.1"/><rect x="2.7" y="6.3" width="13" height="3.6" rx="0.5" fill="#a9c0de" stroke="#111" stroke-width="1.1"/><rect x="2.7" y="11.9" width="9.8" height="3.6" rx="0.5" fill="#a9c0de" stroke="#111" stroke-width="1.1"/><path d="M3.6 1.6H7.6M3.6 7.3H14.8M3.6 12.9H11.6" stroke="#dfe9f5" stroke-width="0.8"/></svg>
<span style="left:1208.2px;top:716px;font-size:12.3px;letter-spacing:-0.11px;">Ausrichten und verteilen (Umschalt+Strg+A)</span>
<svg style="left:1189.0px;top:748.0px;" width="16" height="16" viewBox="0 0 16 16"><defs><linearGradient id="gfl1" x1="0" y1="0" x2="1" y2="0"><stop offset="0.3" stop-color="#000"/><stop offset="1" stop-color="#000" stop-opacity="0.25"/></linearGradient><linearGradient id="gfl2" x1="0" y1="0" x2="0" y2="1"><stop offset="0.3" stop-color="#000"/><stop offset="1" stop-color="#000" stop-opacity="0.2"/></linearGradient><linearGradient id="gfl3" x1="0" y1="0" x2="1" y2="1"><stop offset="0" stop-color="#ffe030"/><stop offset="1" stop-color="#f89010"/></linearGradient></defs><path d="M0 0H16L0 16Z" fill="#fff"/><rect x="0" y="0" width="16" height="2.2" fill="url(#gfl1)"/><rect x="0" y="0" width="2.2" height="16" fill="url(#gfl2)"/><path d="M0 16C1.6 13.6 3.4 11.2 5.6 9.8C8 8.2 10.6 5.4 13 2.6L15 6.8C13.4 8.4 11.4 10 10.2 11.8C9 14 7 15.4 4.4 16Z" fill="#050505"/><path d="M4.6 12.6L6.6 11.2M7.6 10.4L11 7.2" stroke="#bbb" stroke-width="1.1"/><path d="M11.8 4.4L16 1.2V9.6L13.6 7.4Z" fill="url(#gfl3)"/></svg>
<span style="left:1207.2px;top:750px;font-size:12.3px;letter-spacing:-0.07px;">Füllung und Kontur (Umschalt+Strg+F)</span>
<svg style="left:1189.0px;top:782.0px;" width="16" height="16" viewBox="0 0 16 16"><rect x="0.7" y="0.7" width="7.9" height="7.5" rx="0.6" fill="url(#gblue)" stroke="#111" stroke-width="1.3"/><path d="M9.6 4.6L12.2 2.4V4H13.2V5.4H12.2V6.8Z" fill="#d40000"/><path d="M13 6C14.6 7.6 15.2 9.6 15.4 12" fill="none" stroke="#d40000" stroke-width="1.1" stroke-dasharray="1.4 1.2"/></svg>
<span style="left:1208.6px;top:783px;font-size:12.3px;letter-spacing:-0.12px;">Transformation (Umschalt+Strg+M)</span>
<svg style="left:1576px;top:719.0px" width="10" height="7" viewBox="0 0 10 7"><path d="M1 6L5 1.6L9 6" fill="none" stroke="#2e3436" stroke-width="1.7"/></svg>
<svg style="left:1576px;top:753.0px" width="10" height="7" viewBox="0 0 10 7"><path d="M1 6L5 1.6L9 6" fill="none" stroke="#2e3436" stroke-width="1.7"/></svg>
<svg style="left:1576px;top:787.0px" width="10" height="7" viewBox="0 0 10 7"><path d="M1 6L5 1.6L9 6" fill="none" stroke="#2e3436" stroke-width="1.7"/></svg>
<div style="left:1179px;top:173px;width:1px;height:619px;background:#d3cec9;"></div>
<div style="left:0px;top:792px;width:1600px;height:34px;background:#f6f5f4;"></div>
<div style="left:0px;top:792px;width:1564px;height:21px;background:linear-gradient(90deg,#fff 0,#fff 19px,#000000 19px,#000000 38px,#1a1a1a 38px,#1a1a1a 57px,#333333 57px,#333333 76px,#4d4d4d 76px,#4d4d4d 95px,#666666 95px,#666666 114px,#808080 114px,#808080 133px,#999999 133px,#999999 152px,#b3b3b3 152px,#b3b3b3 171px,#cccccc 171px,#cccccc 190px,#e6e6e6 190px,#e6e6e6 209px,#ececec 209px,#ececec 228px,#f2f2f2 228px,#f2f2f2 247px,#f9f9f9 247px,#f9f9f9 266px,#ffffff 266px,#ffffff 285px,#800000 285px,#800000 304px,#ff0000 304px,#ff0000 323px,#808000 323px,#808000 342px,#ffff00 342px,#ffff00 361px,#008000 361px,#008000 380px,#00ff00 380px,#00ff00 399px,#008080 399px,#008080 418px,#00ffff 418px,#00ffff 437px,#000080 437px,#000080 456px,#0000ff 456px,#0000ff 475px,#800080 475px,#800080 494px,#ff00ff 494px,#ff00ff 513px,#2b0000 513px,#2b0000 532px,#550000 532px,#550000 551px,#800000 551px,#800000 570px,#aa0000 570px,#aa0000 589px,#d40000 589px,#d40000 608px,#ff0000 608px,#ff0000 627px,#ff2a2a 627px,#ff2a2a 646px,#ff5555 646px,#ff5555 665px,#ff8080 665px,#ff8080 684px,#ffaaaa 684px,#ffaaaa 703px,#ffd5d5 703px,#ffd5d5 722px,#280b0b 722px,#280b0b 741px,#501616 741px,#501616 760px,#782121 760px,#782121 779px,#a02c2c 779px,#a02c2c 798px,#c83737 798px,#c83737 817px,#d35f5f 817px,#d35f5f 836px,#de8787 836px,#de8787 855px,#e9afaf 855px,#e9afaf 874px,#f4d7d7 874px,#f4d7d7 893px,#241c1c 893px,#241c1c 912px,#483737 912px,#483737 931px,#6c5353 931px,#6c5353 950px,#916f6f 950px,#916f6f 969px,#ac9393 969px,#ac9393 988px,#c8b7b7 988px,#c8b7b7 1007px,#e3dbdb 1007px,#e3dbdb 1026px,#2b1100 1026px,#2b1100 1045px,#552200 1045px,#552200 1064px,#803300 1064px,#803300 1083px,#aa4400 1083px,#aa4400 1102px,#d45500 1102px,#d45500 1121px,#ff6600 1121px,#ff6600 1140px,#ff7f2a 1140px,#ff7f2a 1159px,#ff9955 1159px,#ff9955 1178px,#ffb380 1178px,#ffb380 1197px,#ffccaa 1197px,#ffccaa 1216px,#ffe6d5 1216px,#ffe6d5 1235px,#28170b 1235px,#28170b 1254px,#502d16 1254px,#502d16 1273px,#784421 1273px,#784421 1292px,#a05a2c 1292px,#a05a2c 1311px,#c87137 1311px,#c87137 1330px,#d38d5f 1330px,#d38d5f 1349px,#deaa87 1349px,#deaa87 1368px,#e9c6af 1368px,#e9c6af 1387px,#f4e3d7 1387px,#f4e3d7 1406px,#241f1c 1406px,#241f1c 1425px,#483e37 1425px,#483e37 1444px,#6c5d53 1444px,#6c5d53 1463px,#917c6f 1463px,#917c6f 1482px,#ac9d93 1482px,#ac9d93 1501px,#c8beb7 1501px,#c8beb7 1520px,#e3dedb 1520px,#e3dedb 1539px,#2b2200 1539px,#2b2200 1558px,#554400 1558px,#554400 1564px);"></div>
<svg style="left:0;top:792px" width="19" height="21" viewBox="0 0 19 21"><path d="M0.5 0.5L18.5 20.5M18.5 0.5L0.5 20.5" stroke="#7a0c0c" stroke-width="1.6" fill="none"/></svg>
<div style="left:0px;top:813px;width:1564px;height:13px;background:#cfcfcf;"></div>
<div style="left:3px;top:817px;width:292px;height:6px;background:#7c8082;border-radius:3px;"></div>
<svg style="left:1579px;top:804px" width="5" height="10" viewBox="0 0 5 10"><path d="M5 0V10L0 5Z" fill="#2e3436"/></svg>
<div style="left:0px;top:826px;width:1600px;height:34px;background:#f6f5f4;"></div>
<span style="left:1.6px;top:829px;font-size:12.3px;letter-spacing:-0.06px;">Füllung:</span>
<span style="left:49.6px;top:829px;font-size:12.3px;font-style:italic;letter-spacing:-0.70px;">Keine</span>
<span style="left:1.6px;top:846px;font-size:12.3px;">Kontur:</span>
<div style="left:49px;top:843px;width:32px;height:17px;background:#000;border-radius:2px;"></div>
<span class="fD" style="left:84.8px;top:845px;font-size:12px;letter-spacing:0.20px;">0,969</span>
<span style="left:123.0px;top:837px;font-size:12.3px;letter-spacing:-0.30px;">O:</span>
<div style="left:138px;top:826px;width:67px;height:34px;background:#fff;border:1px solid #cdc7c2;box-sizing:border-box;border-radius:5px;"></div>
<div style="left:170px;top:827px;width:1px;height:32px;background:#ebe9e7;"></div>
<div style="left:187px;top:827px;width:1px;height:32px;background:#ebe9e7;"></div>
<div style="left:174px;top:842px;width:10px;height:2px;background:#2e3436;"></div>
<div style="left:191px;top:842px;width:10px;height:2px;background:#d3d2d0;"></div>
<div style="left:195px;top:838px;width:2px;height:10px;background:#d3d2d0;"></div>
<span class="fD" style="left:140.6px;top:837px;font-size:12px;letter-spacing:-0.10px;">100</span>
<div style="left:207px;top:827px;width:1px;height:33px;background:#dedad6;"></div>
<svg style="left:218.0px;top:836.0px;" width="18" height="14" viewBox="0 0 18 14"><path d="M0.6 8.2C3.6 4 6.6 3 9 3C11.4 3 14.4 4 17.4 8.2C14.4 11.8 11.4 13.2 9 13.2C6.6 13.2 3.6 11.8 0.6 8.2Z" fill="#fff" stroke="#111" stroke-width="1.2"/><circle cx="9" cy="8.2" r="3.7" fill="#111"/><circle cx="7.8" cy="7" r="1.1" fill="#ddd"/><path d="M3.4 4.6L1.8 2.4M6.4 3L5.6 0.4M9.4 2.6L9.6 0M12.2 3.2L13.4 0.8M14.8 4.8L16.6 3" stroke="#111" stroke-width="1.1" fill="none"/></svg>
<svg style="left:255.0px;top:834.0px;" width="16" height="18" viewBox="0 0 16 18"><path d="M3.4 8.4L2.6 5.8Q1.6 2 5.4 1Q9.2 0 10.2 3.8L10.6 5.2" fill="none" stroke="#111" stroke-width="1.3"/><g transform="rotate(-10 8 12)"><rect x="2.4" y="8.2" width="11.6" height="8" rx="0.8" fill="#f6ec8a" stroke="#2a2a1a" stroke-width="1.1"/><path d="M3.4 9.4H13" stroke="#fffbd8" stroke-width="0.9"/><circle cx="8.2" cy="11.4" r="1.1" fill="#000"/><path d="M7.7 11.6H8.7V14H7.7Z" fill="#000"/></g></svg>
<div style="left:281px;top:826px;width:82px;height:34px;background:linear-gradient(#f8f7f6,#edebe9);border:1px solid #cdc7c2;box-sizing:border-box;border-radius:5px;box-shadow:0 1px 1px rgba(0,0,0,0.06);"></div>
<span style="left:294.4px;top:839px;font-size:9.8px;font-weight:700;letter-spacing:-0.17px;">•Ebene 1</span>
<svg style="left:340.0px;top:841.1px" width="10" height="5" viewBox="0 0 10 5"><path d="M0 0H10L5.0 5Z" fill="#2e3436"/></svg>
<span class="fD" style="left:363.4px;top:837px;font-size:12px;font-weight:700;letter-spacing:0.40px;">Rechteck</span>
<span class="fD" style="left:435.4px;top:837px;font-size:12px;letter-spacing:0.31px;">in Ebene</span>
<span class="fD" style="left:494.6px;top:837px;font-size:12px;font-weight:700;letter-spacing:0.53px;">Ebene 1</span>
<span class="fD" style="left:551.8px;top:837px;font-size:12px;">.</span>
<span class="fD" style="left:557.8px;top:837px;font-size:12px;letter-spacing:0.22px;">Klicken</span>
<span class="fD" style="left:605.0px;top:837px;font-size:12px;letter-spacing:0.10px;">Sie</span>
<span class="fD" style="left:628.4px;top:837px;font-size:12px;letter-spacing:-0.30px;">auf</span>
<span class="fD" style="left:652.1px;top:837px;font-size:12px;letter-spacing:0.25px;">die</span>
<span class="fD" style="left:675.8px;top:837px;font-size:12px;letter-spacing:0.10px;">Auswahl,</span>
<span class="fD" style="left:734.3px;top:837px;font-size:12px;letter-spacing:0.50px;">um</span>
<span class="fD" style="left:757.1px;top:837px;font-size:12px;letter-spacing:0.17px;">zwischen</span>
<span class="fD" style="left:816.2px;top:837px;font-size:12px;letter-spacing:0.49px;">Skalieren</span>
<span class="fD" style="left:878.6px;top:837px;font-size:12px;letter-spacing:0.50px;">und</span>
<span class="fD" style="left:906.2px;top:837px;font-size:12px;letter-spacing:0.57px;">Rotieren</span>
<span class="fD" style="left:963.4px;top:837px;font-size:12px;letter-spacing:0.26px;">umzuschalten.</span>
<div style="left:1243px;top:827px;width:1px;height:33px;background:#dedad6;"></div>
<span style="left:1253.2px;top:829px;font-size:12.3px;letter-spacing:-0.30px;">X:</span>
<span style="left:1253.2px;top:846px;font-size:12.3px;letter-spacing:0.20px;">Y:</span>
<span class="fD" style="left:1277.8px;top:828px;font-size:12px;letter-spacing:0.44px;">702,86</span>
<span class="fD" style="left:1277.8px;top:845px;font-size:12px;letter-spacing:0.44px;">380,00</span>
<span style="left:1332.4px;top:837px;font-size:12.3px;letter-spacing:-0.30px;">Z:</span>
<div style="left:1352px;top:826px;width:100px;height:34px;background:#fff;border:1px solid #cdc7c2;box-sizing:border-box;border-radius:5px;"></div>
<div style="left:1407px;top:827px;width:1px;height:32px;background:#ebe9e7;"></div>
<div style="left:1428px;top:827px;width:1px;height:32px;background:#ebe9e7;"></div>
<div style="left:1413px;top:842px;width:10px;height:2px;background:#2e3436;"></div>
<div style="left:1435px;top:842px;width:10px;height:2px;background:#2e3436;"></div>
<div style="left:1439px;top:838px;width:2px;height:10px;background:#2e3436;"></div>
<span class="fD" style="left:1364.8px;top:837px;font-size:12px;letter-spacing:0.20px;">35%</span>
<span style="left:1461.8px;top:837px;font-size:12.3px;letter-spacing:-0.30px;">R:</span>
<div style="left:1482px;top:826px;width:108px;height:34px;background:#fff;border:1px solid #cdc7c2;box-sizing:border-box;border-radius:5px;"></div>
<div style="left:1545px;top:827px;width:1px;height:32px;background:#ebe9e7;"></div>
<div style="left:1566px;top:827px;width:1px;height:32px;background:#ebe9e7;"></div>
<div style="left:1551px;top:842px;width:10px;height:2px;background:#2e3436;"></div>
<div style="left:1573px;top:842px;width:10px;height:2px;background:#2e3436;"></div>
<div style="left:1577px;top:838px;width:2px;height:10px;background:#2e3436;"></div>
<span class="fD" style="left:1498.8px;top:837px;font-size:12px;letter-spacing:0.40px;">0,00°</span>
<div style="left:0px;top:860px;width:1600px;height:40px;background:linear-gradient(90deg,#ece4e0 0,#e9e0dc 9%,#dcd8d6 17%,#d8d5d3 25%,#d9d5d3 70%,#e2dbd7 85%,#ebe2de 100%);"></div>
<div style="left:408px;top:860px;width:160px;height:40px;background:#f3f1ef;"></div>
<div style="left:202px;top:898px;width:152px;height:2px;background:#0078d7;"></div>
<div style="left:408px;top:898px;width:160px;height:2px;background:#0078d7;"></div>
<div style="left:572px;top:898px;width:152px;height:2px;background:#0078d7;"></div>
<svg style="left:16.0px;top:872.0px;" width="16" height="16" viewBox="0 0 16 16"><path d="M0 2.4L6.6 1.4V7.6H0ZM7.6 1.2L16 0V7.6H7.6ZM0 8.4H6.6V14.6L0 13.6ZM7.6 8.4H16V16L7.6 14.8Z" fill="#000"/></svg>
<svg style="left:63.0px;top:868.0px;" width="24" height="24" viewBox="0 0 24 24"><defs><linearGradient id="gtb" x1="0" y1="0" x2="1" y2="1"><stop offset="0" stop-color="#3a9ae8"/><stop offset="0.45" stop-color="#1e62c8"/><stop offset="0.7" stop-color="#2a86dc"/><stop offset="1" stop-color="#2a3ca8"/></linearGradient></defs><path d="M0.8 10C1.5 4 6.5 0.4 12.5 0.4C19 0.4 23.8 5.5 23.8 12C23.8 18.5 19 23 13.5 23.6L12 23L16.5 19.5L17 9.5L8 7.8L4 8.5L2.2 12.5Z" fill="url(#gtb)"/><path d="M2.5 9.5L4.5 7.4L8 8L16.6 9L17.2 19.8L13 21.6L6 18.6L1.8 15.6L1.4 12.5Z" fill="#fdfdfb"/><path d="M4 10L8.6 14.6L16.6 12" fill="none" stroke="#c4c4c4" stroke-width="0.8"/><path d="M2 16.6L7.6 19.4L6.6 22.6C4.5 21.6 2.8 19.4 2 16.6Z" fill="#1a1468"/><circle cx="6.8" cy="7" r="0.8" fill="#b08030"/></svg>
<svg style="left:112.5px;top:871.0px;" width="22" height="18" viewBox="0 0 22 18"><path d="M0.4 1.2Q0.4 0.2 1.4 0.2H8.4L10 2.2H0.4Z" fill="#e8a818"/><path d="M0.4 1.8H20.8Q21.6 1.8 21.6 2.6V17Q21.6 17.8 20.8 17.8H1.2Q0.4 17.8 0.4 17Z" fill="#fdd050"/><path d="M0.4 1.8H9.6L8.6 3H0.4Z" fill="#dca014"/><path d="M4 17.8V11.2Q4 10.4 4.8 10.4H17.2Q18 10.4 18 11.2V17.8H14V14H8V17.8Z" fill="#3a96e0"/><path d="M8 14H14V17.8H8Z" fill="#f4c030"/></svg>
<svg style="left:161.0px;top:868.0px;" width="24" height="24" viewBox="0 0 24 24"><defs><linearGradient id="gsk" x1="0" y1="0" x2="1" y2="1"><stop offset="0" stop-color="#10c0f8"/><stop offset="1" stop-color="#0a78d4"/></linearGradient></defs><path d="M7 0.8C9 0.6 10 1.6 12 1.6C18 1.6 22.6 6 22.6 12C22.6 13.4 23.6 15 23.4 17C23 20.8 19.6 23.6 16.4 23.2C14.8 23 13.6 22.6 12 22.6C6 22.6 1.6 18 1.6 12C1.6 10.4 0.6 9 0.8 7C1.2 3.6 3.8 1.2 7 0.8Z" fill="url(#gsk)"/><text x="12" y="17.8" text-anchor="middle" font-family="'Liberation Sans',sans-serif" font-weight="700" font-size="16.5" fill="#fff">S</text></svg>
<svg style="left:207.5px;top:868.0px;" width="24" height="24" viewBox="0 0 24 24"><circle cx="12" cy="12" r="11.5" fill="#db4437"/><path d="M12 12L1.4 7.4A11.5 11.5 0 0 0 9.6 23.3L14 15.6Z" fill="#1da462"/><path d="M12 12L14 15.6L9.6 23.3A11.5 11.5 0 0 0 22.8 8H12Z" fill="#ffcd40"/><path d="M12 12L22.8 8A11.5 11.5 0 0 0 1.4 7.4L6.6 12Z" fill="#db4437"/><circle cx="12" cy="12" r="5.4" fill="#f4f4f4"/><circle cx="12" cy="12" r="4.3" fill="#4a8af4"/></svg>
<span style="left:235.4px;top:874px;font-size:12px;color:#000;letter-spacing:0.02px;">Heraldik - die Welt ...</span>
<svg style="left:370.0px;top:869.0px;" width="26" height="22" viewBox="0 0 26 22"><path d="M11 1H19L25.6 20.6H18.4L15.4 11L12 20.6H0.8L5 12Z" fill="#f4f2f0" stroke="#c4c0bc" stroke-width="0.8"/><path d="M5.4 3.6L6.6 8L7.6 2.4L8.6 7.6L9.8 1.6L10.6 7.6L12 3L12.2 8.4L13.8 5.4C14 9.4 12.4 12 10.6 13.2L10 17.6L7.6 17.8L7.8 13.4C5.4 12 4.4 8 5.4 3.6Z" fill="#d8341c"/></svg>
<svg style="left:418.0px;top:868.0px;" width="24" height="24" viewBox="0 0 24 24"><defs><linearGradient id="gink" x1="0.2" y1="0" x2="1" y2="0.8"><stop offset="0" stop-color="#55555c"/><stop offset="0.45" stop-color="#050508"/><stop offset="1" stop-color="#3e4e70"/></linearGradient></defs><path d="M12 0.2Q12.7 0.2 13.4 0.9L23.4 10.9Q24.2 11.8 23.2 12.8Q20.6 15.2 17.6 16.2H6.4Q3.4 15.2 0.8 12.8Q-0.2 11.8 0.6 10.9L10.6 0.9Q11.3 0.2 12 0.2Z" fill="url(#gink)"/><path d="M12 1.4L15.4 4.8L16.4 6.6L14.8 6L14.2 7.6L12.8 6L12 8.6L11 6.2L9.2 8L9 6.4L5.8 7.6Z" fill="#fff"/><path d="M3.4 15.6C5.2 14.8 9 15 10.8 15.8C12.4 16.6 9 17.2 10 18C11.4 19 16.4 17.6 17.6 19C18.6 20.2 14.4 20.4 14.6 21.6C14.8 22.8 13 24 11.4 23.8C9.6 23.6 9.6 22.4 8.2 21.6C6.6 20.8 4.4 20.4 5.4 19.2C6.2 18.4 2.2 17 3.4 15.6Z" fill="#0a0a10"/><path d="M11.6 15.6H18C18.6 16.6 19.4 17.2 18.6 18C16.8 18.4 12.6 18.2 11.6 15.6Z" fill="#1c2c4c"/><ellipse cx="20.8" cy="17.4" rx="2.2" ry="0.9" fill="#111" transform="rotate(-12 20.8 17.4)"/><ellipse cx="18.2" cy="20" rx="1.2" ry="0.6" fill="#333"/><ellipse cx="4.4" cy="20.2" rx="1.4" ry="0.8" fill="#111" transform="rotate(-15 4.4 20.2)"/></svg>
<span style="left:445.2px;top:874px;font-size:12px;color:#000;letter-spacing:-0.03px;">*Neues Dokument ...</span>
<svg style="left:578.0px;top:868.0px;" width="24" height="24" viewBox="0 0 24 24"><defs><linearGradient id="gink" x1="0.2" y1="0" x2="1" y2="0.8"><stop offset="0" stop-color="#55555c"/><stop offset="0.45" stop-color="#050508"/><stop offset="1" stop-color="#3e4e70"/></linearGradient></defs><path d="M12 0.2Q12.7 0.2 13.4 0.9L23.4 10.9Q24.2 11.8 23.2 12.8Q20.6 15.2 17.6 16.2H6.4Q3.4 15.2 0.8 12.8Q-0.2 11.8 0.6 10.9L10.6 0.9Q11.3 0.2 12 0.2Z" fill="url(#gink)"/><path d="M12 1.4L15.4 4.8L16.4 6.6L14.8 6L14.2 7.6L12.8 6L12 8.6L11 6.2L9.2 8L9 6.4L5.8 7.6Z" fill="#fff"/><path d="M3.4 15.6C5.2 14.8 9 15 10.8 15.8C12.4 16.6 9 17.2 10 18C11.4 19 16.4 17.6 17.6 19C18.6 20.2 14.4 20.4 14.6 21.6C14.8 22.8 13 24 11.4 23.8C9.6 23.6 9.6 22.4 8.2 21.6C6.6 20.8 4.4 20.4 5.4 19.2C6.2 18.4 2.2 17 3.4 15.6Z" fill="#0a0a10"/><path d="M11.6 15.6H18C18.6 16.6 19.4 17.2 18.6 18C16.8 18.4 12.6 18.2 11.6 15.6Z" fill="#1c2c4c"/><ellipse cx="20.8" cy="17.4" rx="2.2" ry="0.9" fill="#111" transform="rotate(-12 20.8 17.4)"/><ellipse cx="18.2" cy="20" rx="1.2" ry="0.6" fill="#333"/><ellipse cx="4.4" cy="20.2" rx="1.4" ry="0.8" fill="#111" transform="rotate(-15 4.4 20.2)"/></svg>
<span style="left:605.4px;top:874px;font-size:12px;color:#000;letter-spacing:-0.02px;">*Neues Dokument ...</span>
<svg style="left:1390.0px;top:876.0px;" width="14" height="8" viewBox="0 0 14 8"><path d="M1.2 7L7 1.2L12.8 7" fill="none" stroke="#000" stroke-width="1.2"/></svg>
<svg style="left:1414.0px;top:873.0px;" width="16" height="14" viewBox="0 0 16 14"><path d="M1 13.4A12.4 12.4 0 0 1 13.4 1M4.4 13.4A9 9 0 0 1 13.4 4.4M7.8 13.4A5.6 5.6 0 0 1 13.4 7.8" fill="none" stroke="#222" stroke-width="1.1"/><circle cx="12.8" cy="12.4" r="1.5" fill="#111"/></svg>
<svg style="left:1436.0px;top:874.0px;" width="18" height="12" viewBox="0 0 18 12"><path d="M1 0.4V3M3.6 0.4V3M0 3H4.6V5Q4.6 7 2.3 7Q0 7 0 5ZM2.3 7V9" fill="none" stroke="#111" stroke-width="1"/><rect x="4.6" y="2.6" width="12" height="7.4" fill="none" stroke="#111" stroke-width="1.1"/><rect x="6" y="4" width="8.4" height="4.6" fill="#111"/><path d="M17.2 4.8V7.8" stroke="#111" stroke-width="1.4"/></svg>
<svg style="left:1459.0px;top:873.0px;" width="18" height="14" viewBox="0 0 18 14"><path d="M0.6 4.8H3.4L7 1.4V12.6L3.4 9.2H0.6Z" fill="none" stroke="#111" stroke-width="1.1" stroke-linejoin="round"/><path d="M9.4 4.6Q10.8 7 9.4 9.4M11.6 3Q13.8 7 11.6 11" fill="none" stroke="#111" stroke-width="1.1"/><path d="M14 1.2Q17 7 14 12.8" fill="none" stroke="#999" stroke-width="1"/></svg>
<span style="left:1499.8px;top:864px;font-size:12px;color:#000;letter-spacing:-0.35px;">14:58</span>
<span style="left:1486.6px;top:883px;font-size:12px;color:#000;letter-spacing:-0.73px;">30.01.2021</span>
<svg style="left:1559.0px;top:872.0px;" width="24" height="24" viewBox="0 0 24 24"><path d="M0.4 0.6H16.4V13.6H7.6L3.6 17.4V13.6H0.4Z" fill="#000"/><path d="M3 4H13.8M3 6.6H13.8M3 9.2H13.8" stroke="#e4dcd8" stroke-width="1"/><circle cx="15.4" cy="16.4" r="7" fill="#d4d0ce" stroke="#6a6866" stroke-width="0.8"/><text x="15.5" y="20.6" text-anchor="middle" font-family="'Liberation Sans',sans-serif" font-size="11.5" fill="#000">1</text></svg>
<div style="left:1595px;top:860px;width:1px;height:40px;background:#9a9795;"></div>
<div style="left:762px;top:135px;width:128px;height:34px;border:4px solid #fb0007;box-sizing:border-box;border-radius:4px;"></div>
<div style="left:933px;top:135px;width:130px;height:37px;border:4px solid #fb0007;box-sizing:border-box;border-radius:4px;"></div>
<div style="left:1060px;top:135px;width:67px;height:38px;border:4px solid #fb0007;box-sizing:border-box;border-radius:4px;"></div>
</div></body></html>
